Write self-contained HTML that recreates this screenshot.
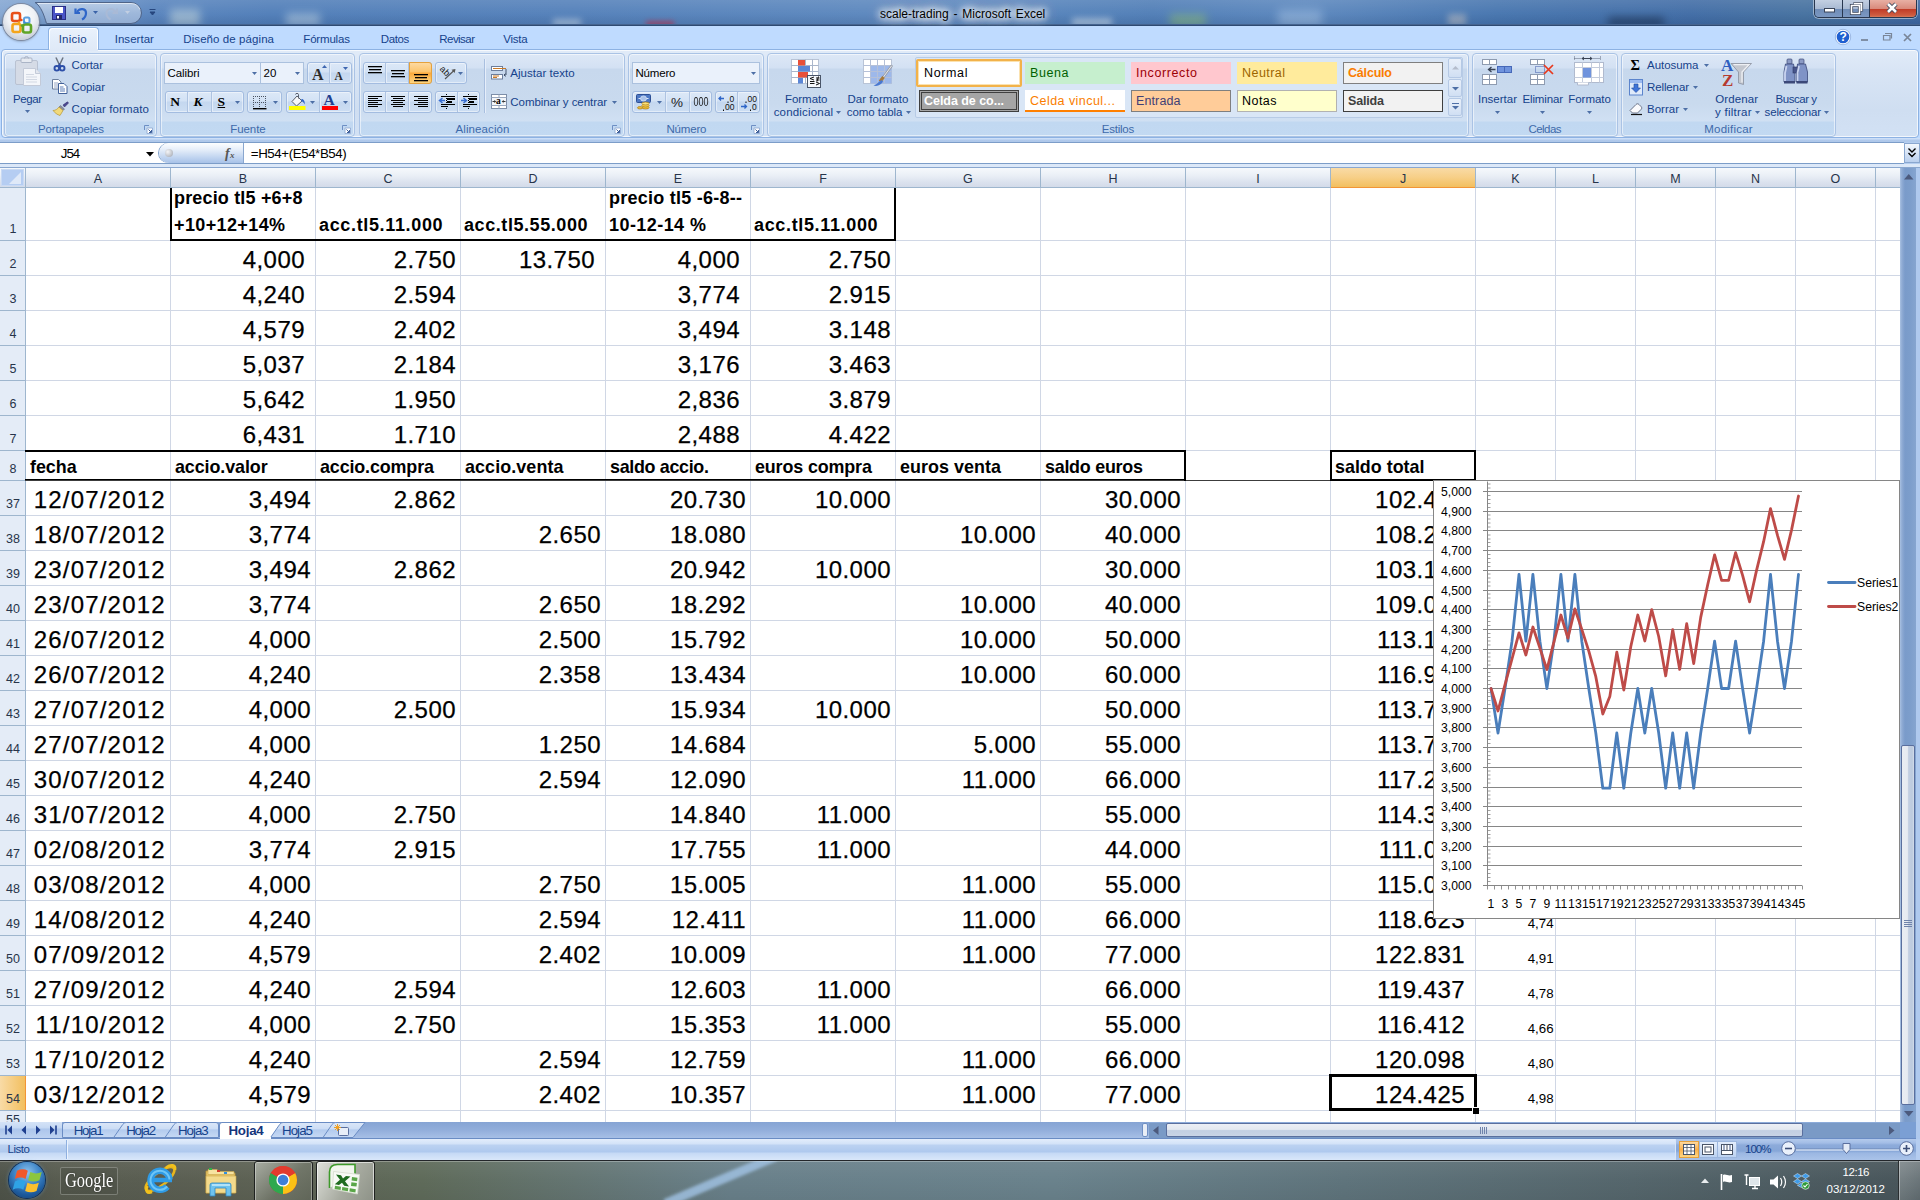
<!DOCTYPE html>
<html lang="es"><head><meta charset="utf-8"><title>scale-trading - Microsoft Excel</title>
<style>
html,body{margin:0;padding:0;}
body{width:1920px;height:1200px;position:relative;overflow:hidden;background:#fff;font-family:"Liberation Sans",sans-serif;font-size:12px;color:#15428b;}
.a{position:absolute;}
.t{position:absolute;white-space:nowrap;line-height:1;}
svg{position:absolute;overflow:visible;}
/* title */
#title{left:0;top:0;width:1920px;height:25px;overflow:hidden;background:linear-gradient(90deg,#84a6d2 0,#7a9fce 2%,#6890c6 5%,#5783bd 8%,#4f7db8 14%,#527fb9 30%,#5a86bd 45%,#5684bc 52%,#4f7db6 60%,#5a86bd 68%,#4574ae 78%,#3f6ba5 88%,#44709f 94%,#3c66a0 100%);}
#tabrow{left:0;top:26px;width:1920px;height:24px;background:#bfdbff;}
#ribbon{left:0;top:50px;width:1920px;height:88px;background:#bfdbff;}
.grp{position:absolute;top:53px;height:82px;border:1px solid #aac3e5;border-radius:4px;background:linear-gradient(#dde8f6 0,#d3e1f3 14px,#c7d8ed 15px,#c9daee 50px,#d0e0f3 67px,#c1d8f1 68px,#c2d9f2 82px);box-shadow:inset 0 0 0 1px rgba(255,255,255,.55);}
.glab{position:absolute;bottom:0;left:0;right:0;height:14px;text-align:center;font-size:12px;line-height:14px;color:#3e6aaa;}
.rt{position:absolute;white-space:nowrap;line-height:1;font-size:12px;color:#15428b;}
.bg{border:1px solid #a3bce0;border-radius:3px;background:linear-gradient(#dce8f7 0,#d3e2f5 45%,#c4d7ef 50%,#cddef3 100%);box-shadow:inset 0 0 0 1px rgba(255,255,255,.45);}
.cb{border:1px solid #abc1de;background:#eaf1fb;}
.hot{border:1px solid #e5a13c;background:linear-gradient(#fdd9a0 0,#fcc46c 45%,#fba83a 50%,#fdd683 100%);}
.ser{font-family:"Liberation Serif",serif;}

</style></head>
<body>
<div class="a" id="title">
<div class="a" style="left:170px;top:9px;width:30px;height:18px;background:#cfe0e0;opacity:.5;filter:blur(4px)"></div>
<div class="a" style="left:286px;top:13px;width:34px;height:14px;background:#cfe0ea;opacity:.45;filter:blur(4px)"></div>
<div class="a" style="left:553px;top:19px;width:28px;height:8px;background:#dfeaf2;opacity:.5;filter:blur(3px)"></div>
<div class="a" style="left:646px;top:21px;width:28px;height:6px;background:#d0203a;opacity:.55;filter:blur(2.5px)"></div>
<div class="a" style="left:1072px;top:18px;width:40px;height:9px;background:#e3edf4;opacity:.5;filter:blur(3px)"></div>
<div class="a" style="left:1170px;top:14px;width:36px;height:13px;background:#8fc070;opacity:.5;filter:blur(4px)"></div>
<div class="a" style="left:1278px;top:10px;width:44px;height:17px;background:#b8d2ee;opacity:.4;filter:blur(5px)"></div>
<div class="a" style="left:1448px;top:14px;width:18px;height:12px;background:#e8d8c8;opacity:.4;filter:blur(3px)"></div>
<div class="a" style="left:1608px;top:17px;width:56px;height:10px;background:#10203a;opacity:.5;filter:blur(4px)"></div>
<div class="a" style="left:0;top:0;width:1920px;height:25px;background:linear-gradient(rgba(255,255,255,.12) 0,rgba(255,255,255,.03) 55%,rgba(0,0,20,.08) 100%)"></div>
</div>
<div class="a" style="left:0;top:24px;width:1920px;height:1px;background:#46648f"></div>
<div class="a" style="left:0;top:25px;width:1920px;height:1px;background:#2e4a72"></div>
<svg style="left:30px;top:0" width="120" height="26" viewBox="0 0 120 26">
<defs><linearGradient id="qg" x1="0" y1="0" x2="0" y2="1"><stop offset="0" stop-color="#c3d4ea" stop-opacity=".85"/><stop offset=".5" stop-color="#a9c0df" stop-opacity=".85"/><stop offset="1" stop-color="#9db6d9" stop-opacity=".85"/></linearGradient></defs>
<path d="M5 2.500 H101 a10.500 10.500 0 0 1 0 21 H16.500 C14 15 11 6 5 2.500z" fill="url(#qg)" stroke="#4f6488" stroke-width="1"/>
<path d="M8 3.500 H101 a9.500 9.500 0 0 1 9 6" fill="none" stroke="rgba(255,255,255,.55)" stroke-width="1"/>
</svg>
<svg style="left:50px;top:4px" width="110" height="18" viewBox="0 0 110 18">
<rect x="2.500" y="2.500" width="13" height="13" fill="#4b55c8" stroke="#2a2f86"/><rect x="5" y="3" width="8" height="6" fill="#fff"/><rect x="6" y="11" width="6" height="4.500" fill="#23286a"/><rect x="7" y="12" width="2" height="2.500" fill="#fff"/>
<path d="M25.500 4.500 L25.500 9 L30 9" fill="none" stroke="#2f66c8" stroke-width="2.200"/><path d="M27 8 C30 3.500 36 4.500 36 9 C36 12 34 14.500 32 15.500" fill="none" stroke="#2f66c8" stroke-width="2.200"/>
<path d="M43 7 l5 0 l-2.500 3z" fill="#3b63a8"/>
<path d="M67 4.500 L67 9 L62.500 9" fill="none" stroke="#a9bad6" stroke-width="2"/><path d="M65.500 8 C62.500 3.500 56.500 4.500 56.500 9 C56.500 12 58.500 14.500 60.500 15.500" fill="none" stroke="#a9bad6" stroke-width="2"/>
<path d="M75 7 l5 0 l-2.500 3z" fill="#c3cfe2"/>
<path d="M99.500 5.500 h6 M100 8 l5 0 l-2.500 3z" stroke="#27477f" fill="#27477f" stroke-width="1"/>
</svg>
<div class="t" style="left:880px;top:8px;font-size:12px;color:#000;word-spacing:1.5px;text-shadow:0 0 6px #fff,0 0 8px #fff,0 0 10px #fff,0 0 14px rgba(255,255,255,.9),0 0 18px rgba(255,255,255,.7)">scale-trading - Microsoft Excel</div>
<div class="a" style="left:1814px;top:0;width:103px;height:18px;border:1px solid #28374f;border-top:none;border-radius:0 0 5px 5px;box-shadow:0 0 0 1px rgba(255,255,255,.45);overflow:hidden;box-sizing:border-box">
<div class="a" style="left:0;top:0;width:27px;height:18px;background:linear-gradient(#c3d0e2 0,#a9bad3 48%,#6f8cb6 50%,#7d9ac4 100%);border-right:1px solid #28374f"></div>
<div class="a" style="left:28px;top:0;width:26px;height:18px;background:linear-gradient(#c3d0e2 0,#a9bad3 48%,#6f8cb6 50%,#7d9ac4 100%);border-right:1px solid #28374f"></div>
<div class="a" style="left:55px;top:0;width:48px;height:18px;background:linear-gradient(#e8b0a4 0,#d98a7c 48%,#c03a26 50%,#cf5c40 85%,#dd8a68 100%)"></div>
</div>
<svg style="left:1814px;top:0" width="104" height="18" viewBox="0 0 104 18">
<rect x="10.500" y="8.500" width="10" height="3.500" fill="#fff" stroke="#3a4559" stroke-width="1"/>
<path d="M37.500 5.500 h8 v8 h-8z M39.500 3.500 h8 v8" fill="none" stroke="#3a4559" stroke-width="3.200"/><path d="M37.500 5.500 h8 v8 h-8z M40 3.500 h7.500 v7.500" fill="none" stroke="#fff" stroke-width="1.600"/>
<path d="M74 4 l8 8 M82 4 l-8 8" stroke="#3a4559" stroke-width="4.400"/><path d="M74 4 l8 8 M82 4 l-8 8" stroke="#fff" stroke-width="2.600"/>
</svg>
<div class="a" id="tabrow"></div>
<div class="a" id="ribbon"></div>
<div class="a" style="left:1px;top:49px;width:1916px;height:87px;border:1px solid #8db2e3;border-radius:4px;background:linear-gradient(#e1ebf8 0,#d9e5f5 20px,#cfdef1 60px,#d2e1f4 86px);box-shadow:inset 0 0 0 1px rgba(255,255,255,.7)"></div>
<div class="a" style="left:48px;top:27px;width:49px;height:22px;border:1px solid #8db2e3;border-bottom:none;border-radius:4px 4px 0 0;background:linear-gradient(#eaf2fc 0,#e3edfa 50%,#dfe9f7 100%);box-shadow:inset 1px 1px 0 #fff,inset -1px 0 0 #fff"></div><div class="a" style="left:49px;top:49px;width:49px;height:2px;background:#dfe9f7"></div>
<div class="t" style="left:58.7px;top:34.3px;font-size:11.5px;color:#15428b;letter-spacing:0.23px;">Inicio</div>
<div class="t" style="left:114.7px;top:34.3px;font-size:11.5px;color:#15428b;letter-spacing:0.04px;">Insertar</div>
<div class="t" style="left:183.3px;top:34.3px;font-size:11.5px;color:#15428b;letter-spacing:0.08px;">Diseño de página</div>
<div class="t" style="left:303.3px;top:34.3px;font-size:11.5px;color:#15428b;letter-spacing:-0.18px;">Fórmulas</div>
<div class="t" style="left:380.7px;top:34.3px;font-size:11.5px;color:#15428b;letter-spacing:-0.36px;">Datos</div>
<div class="t" style="left:439.3px;top:34.3px;font-size:11.5px;color:#15428b;letter-spacing:-0.55px;">Revisar</div>
<div class="t" style="left:503.3px;top:34.3px;font-size:11.5px;color:#15428b;letter-spacing:-0.24px;">Vista</div>
<svg style="left:1834px;top:28px" width="84" height="18" viewBox="0 0 84 18"><g transform="translate(-3 0)">
<circle cx="12" cy="9" r="7" fill="#1f5fd0" stroke="#fff" stroke-width="1.300"/><circle cx="12" cy="9" r="7.700" fill="none" stroke="#6f93cf" stroke-width=".600"/>
<path d="M30 12 h7" stroke="#6f7c90" stroke-width="1.600"/>
<path d="M52.500 7.500 h6.500 v4.500 h-6.500z M54 5.500 h6.500 v5" fill="none" stroke="#7a8698" stroke-width="1.200"/>
<path d="M73 6 l7 7 M80 6 l-7 7" stroke="#7a8698" stroke-width="1.700"/>
</g></svg>
<div class="t" style="left:1839.5px;top:30.5px;font-size:12px;font-weight:bold;color:#fff">?</div>
<div class="grp" style="left:4px;width:151px"></div>
<div class="t" style="left:38.0px;top:124.3px;font-size:11.5px;color:#3e6aaa;letter-spacing:-0.16px;">Portapapeles</div>
<svg style="left:144px;top:125px" width="9" height="9" viewBox="0 0 9 9"><path d="M0.500 5 V0.500 H5" fill="none" stroke="#6d8fc4" stroke-width="1"/><path d="M3 3 h5.500 v5.500 h-5.500z" fill="#fff" stroke="#8aa5cf" stroke-width=".8"/><path d="M4.500 4.500 l3 3 M7.500 5 v2.500 h-2.500" fill="none" stroke="#3d5f9a" stroke-width="1"/></svg>
<div class="grp" style="left:160px;width:193px"></div>
<div class="t" style="left:230.2px;top:124.3px;font-size:11.5px;color:#3e6aaa;letter-spacing:-0.06px;">Fuente</div>
<svg style="left:342px;top:125px" width="9" height="9" viewBox="0 0 9 9"><path d="M0.500 5 V0.500 H5" fill="none" stroke="#6d8fc4" stroke-width="1"/><path d="M3 3 h5.500 v5.500 h-5.500z" fill="#fff" stroke="#8aa5cf" stroke-width=".8"/><path d="M4.500 4.500 l3 3 M7.500 5 v2.500 h-2.500" fill="none" stroke="#3d5f9a" stroke-width="1"/></svg>
<div class="grp" style="left:359px;width:264px"></div>
<div class="t" style="left:455.5px;top:124.3px;font-size:11.5px;color:#3e6aaa;letter-spacing:0.1px;">Alineación</div>
<svg style="left:612px;top:125px" width="9" height="9" viewBox="0 0 9 9"><path d="M0.500 5 V0.500 H5" fill="none" stroke="#6d8fc4" stroke-width="1"/><path d="M3 3 h5.500 v5.500 h-5.500z" fill="#fff" stroke="#8aa5cf" stroke-width=".8"/><path d="M4.500 4.500 l3 3 M7.500 5 v2.500 h-2.500" fill="none" stroke="#3d5f9a" stroke-width="1"/></svg>
<div class="grp" style="left:628px;width:134px"></div>
<div class="t" style="left:666.5px;top:124.3px;font-size:11.5px;color:#3e6aaa;letter-spacing:-0.18px;">Número</div>
<svg style="left:751px;top:125px" width="9" height="9" viewBox="0 0 9 9"><path d="M0.500 5 V0.500 H5" fill="none" stroke="#6d8fc4" stroke-width="1"/><path d="M3 3 h5.500 v5.500 h-5.500z" fill="#fff" stroke="#8aa5cf" stroke-width=".8"/><path d="M4.500 4.500 l3 3 M7.500 5 v2.500 h-2.500" fill="none" stroke="#3d5f9a" stroke-width="1"/></svg>
<div class="grp" style="left:767px;width:700px"></div>
<div class="t" style="left:1101.8px;top:124.3px;font-size:11.5px;color:#3e6aaa;letter-spacing:-0.23px;">Estilos</div>
<div class="grp" style="left:1472px;width:144px"></div>
<div class="t" style="left:1528.5px;top:124.3px;font-size:11.5px;color:#3e6aaa;letter-spacing:-0.56px;">Celdas</div>
<div class="grp" style="left:1621px;width:213px"></div>
<div class="t" style="left:1704.3px;top:124.3px;font-size:11.5px;color:#3e6aaa;letter-spacing:0.21px;">Modificar</div>
<svg style="left:14px;top:56px" width="30" height="32" viewBox="0 0 30 32">
<rect x="1.500" y="4.500" width="22" height="24" rx="1.500" fill="#d5dbe6" stroke="#b9c2d2"/>
<rect x="7" y="2" width="11" height="4.500" rx="1" fill="#e6eaf1" stroke="#aab4c6"/><path d="M10.500 2.500 a2 2 0 0 1 4 0" fill="none" stroke="#aab4c6"/>
<path d="M9.500 12.500 h12 l5 5 v12 h-17z" fill="#f4f6fa" stroke="#c3cad8"/><path d="M21.500 12.500 v5 h5" fill="#e3e7ef" stroke="#c3cad8"/>
<path d="M12 18.500 h8 M12 21 h11 M12 23.500 h11 M12 26 h11" stroke="#d2d8e3" stroke-width="1"/>
</svg>
<div class="t" style="left:13.0px;top:94.3px;font-size:11.5px;color:#15428b;letter-spacing:-0.42px;">Pegar</div>
<svg style="left:25.0px;top:110.0px" width="5" height="3"><path d="M0 0 h5 l-2.5 3 z" fill="#4d6fa6"/></svg>
<svg style="left:53px;top:57px" width="13" height="16" viewBox="0 0 13 16">
<path d="M3.200 1 L6.700 8.500 M9.800 1 L6.300 8.500" stroke="#6a7380" stroke-width="1.500" fill="none" stroke-linecap="round"/>
<circle cx="3.800" cy="11.300" r="2.300" fill="none" stroke="#2d4fa8" stroke-width="1.900"/><circle cx="9.200" cy="11.300" r="2.300" fill="none" stroke="#2d4fa8" stroke-width="1.900"/>
<path d="M5.200 9.500 L6.500 7.500 L7.800 9.500" stroke="#2d4fa8" stroke-width="1.600" fill="none"/>
</svg>
<div class="t" style="left:71.5px;top:60.3px;font-size:11.5px;color:#15428b;letter-spacing:-0.09px;">Cortar</div>
<svg style="left:52px;top:79px" width="16" height="15" viewBox="0 0 16 15">
<path d="M0.500 0.500 h6 l2.500 2.500 v7 h-8.500z" fill="#fff" stroke="#6a7f9f"/><path d="M2 4 h4 M2 6 h5 M2 8 h5" stroke="#7d93b8" stroke-width=".8"/>
<path d="M6.500 4.500 h5.500 l3 3 v7 h-8.500z" fill="#fff" stroke="#42629a"/><path d="M8 8 h3.500 M8 10 h5 M8 12 h5" stroke="#4a6fb0" stroke-width=".9"/>
</svg>
<div class="t" style="left:71.5px;top:82.3px;font-size:11.5px;color:#15428b;letter-spacing:-0.08px;">Copiar</div>
<svg style="left:52px;top:101px" width="17" height="16" viewBox="0 0 17 16">
<path d="M11 4 L15.500 0.800 L16.500 2 L12.500 6z" fill="#4a4690" stroke="#332f6e" stroke-width=".6"/>
<path d="M8.500 4.500 L12.500 8 L11 9.500 L7 6z" fill="#8a8fa0" stroke="#5c6070" stroke-width=".5"/>
<path d="M7 6 L11 9.500 L8 14.500 L4.500 13 L1 9.500 C3.500 9.500 5.500 8 7 6z" fill="#f1d97a" stroke="#b69734" stroke-width=".7"/>
</svg>
<div class="t" style="left:71.5px;top:104.3px;font-size:11.5px;color:#15428b;letter-spacing:0.1px;">Copiar formato</div>
<div class="a cb" style="left:164.0px;top:62.0px;width:95.0px;height:20.0px"></div>
<div class="t" style="left:167.5px;top:68.0px;font-size:11.5px;color:#000;letter-spacing:-0.07px;">Calibri</div>
<svg style="left:251.5px;top:71.5px" width="5" height="3"><path d="M0 0 h5 l-2.5 3 z" fill="#4d6fa6"/></svg>
<div class="a cb" style="left:260.0px;top:62.0px;width:42.0px;height:20.0px"></div>
<div class="t" style="left:263.5px;top:68.0px;font-size:11.5px;color:#000;">20</div>
<svg style="left:294.5px;top:71.5px" width="5" height="3"><path d="M0 0 h5 l-2.5 3 z" fill="#4d6fa6"/></svg>
<div class="a bg" style="left:307.0px;top:62.0px;width:43.0px;height:20.0px"></div>
<div class="a" style="left:329.0px;top:63.0px;width:1px;height:20.0px;background:#aec3e1"></div><div class="a" style="left:330.0px;top:63.0px;width:1px;height:20.0px;background:#e4edf9"></div>
<div class="t" style="left:312.0px;top:66.7px;font-size:16px;color:#2b2b2b;font-weight:bold;font-family:'Liberation Serif',serif;">A</div>
<div class="t" style="left:334.6px;top:70.5px;font-size:11.5px;color:#2b2b2b;font-weight:bold;font-family:'Liberation Serif',serif;">A</div>
<svg style="left:321.500px;top:65px" width="5" height="3"><path d="M0 3 h5 l-2.500 -3z" fill="#3d66b0"/></svg><svg style="left:342.500px;top:66.500px" width="5" height="3"><path d="M0 0 h5 l-2.500 3z" fill="#3d66b0"/></svg>
<div class="a bg" style="left:165.0px;top:91.0px;width:77.0px;height:20.0px"></div>
<div class="a" style="left:187.0px;top:92.0px;width:1px;height:20.0px;background:#aec3e1"></div><div class="a" style="left:188.0px;top:92.0px;width:1px;height:20.0px;background:#e4edf9"></div>
<div class="a" style="left:210.5px;top:92.0px;width:1px;height:20.0px;background:#aec3e1"></div><div class="a" style="left:211.5px;top:92.0px;width:1px;height:20.0px;background:#e4edf9"></div>
<div class="t" style="left:170.3px;top:94.9px;font-size:13.5px;color:#000;font-weight:bold;font-family:'Liberation Serif',serif;">N</div>
<div class="t" style="left:193.5px;top:94.9px;font-size:13.5px;color:#000;font-weight:bold;font-style:italic;font-family:'Liberation Serif',serif;">K</div>
<div class="t" style="left:217.6px;top:94.9px;font-size:13.5px;color:#000;font-weight:bold;font-family:'Liberation Serif',serif;text-decoration:underline;">S</div>
<svg style="left:235.0px;top:101.0px" width="5" height="3"><path d="M0 0 h5 l-2.5 3 z" fill="#4d6fa6"/></svg>
<div class="a bg" style="left:247.0px;top:91.0px;width:33.0px;height:20.0px"></div>
<svg style="left:253px;top:95.500px" width="14" height="14" viewBox="0 0 14 14"><path d="M0 0.500 h13 M0 6.500 h13 M0.500 0 v12 M6.500 0 v12 M12.500 0 v12" stroke="#4a5260" stroke-width="1" stroke-dasharray="1 1" fill="none"/><path d="M0 12.700 h13.500" stroke="#000" stroke-width="1.400"/></svg>
<svg style="left:273.0px;top:101.0px" width="5" height="3"><path d="M0 0 h5 l-2.5 3 z" fill="#4d6fa6"/></svg>
<div class="a bg" style="left:286.0px;top:91.0px;width:64.0px;height:20.0px"></div>
<div class="a" style="left:318.5px;top:92.0px;width:1px;height:20.0px;background:#aec3e1"></div><div class="a" style="left:319.5px;top:92.0px;width:1px;height:20.0px;background:#e4edf9"></div>
<svg style="left:288px;top:93px" width="20" height="18" viewBox="0 0 20 18">
<path d="M4 8.500 L9 3 L14 8 L8.500 13 z" fill="#f6f7f9" stroke="#5a606c" stroke-width="1"/><path d="M7.500 1.500 c0 -1.500 3 -1.500 3 0 v4" fill="none" stroke="#5a606c" stroke-width="1"/>
<path d="M13.500 6 c2.500 0 3.500 2.500 3.300 5.500 c-1 -2 -2 -3 -3.800 -3.300z" fill="#2f66c8"/>
<rect x="1" y="13" width="16.500" height="4" fill="#ffff00"/></svg>
<svg style="left:310.0px;top:101.0px" width="5" height="3"><path d="M0 0 h5 l-2.5 3 z" fill="#4d6fa6"/></svg>
<div class="t" style="left:323.5px;top:91.9px;font-size:15.5px;color:#1f3f8f;font-weight:bold;font-family:'Liberation Serif',serif;">A</div>
<div class="a" style="left:322px;top:106px;width:16px;height:4px;background:#f00"></div>
<svg style="left:343.0px;top:101.0px" width="5" height="3"><path d="M0 0 h5 l-2.5 3 z" fill="#4d6fa6"/></svg>
<div class="a bg" style="left:363.0px;top:62.0px;width:67.0px;height:20.0px"></div>
<div class="a" style="left:385.0px;top:63.0px;width:1px;height:20.0px;background:#aec3e1"></div><div class="a" style="left:386.0px;top:63.0px;width:1px;height:20.0px;background:#e4edf9"></div>
<div class="a" style="left:408.0px;top:63.0px;width:1px;height:20.0px;background:#aec3e1"></div><div class="a" style="left:409.0px;top:63.0px;width:1px;height:20.0px;background:#e4edf9"></div>
<div class="a hot" style="left:409px;top:62px;width:21px;height:20px;border-radius:0 3px 3px 0"></div>
<svg style="left:368.0px;top:66.0px" width="20" height="20"><rect x="0" y="0" width="14" height="1.300" fill="#000"/><rect x="1" y="3" width="12" height="1.300" fill="#000"/><rect x="0" y="6" width="14" height="1.300" fill="#000"/></svg>
<svg style="left:391.0px;top:70.0px" width="20" height="20"><rect x="0" y="0" width="14" height="1.300" fill="#000"/><rect x="1" y="3" width="12" height="1.300" fill="#000"/><rect x="0" y="6" width="14" height="1.300" fill="#000"/></svg>
<svg style="left:414.0px;top:74.0px" width="20" height="20"><rect x="0" y="0" width="14" height="1.300" fill="#000"/><rect x="1" y="3" width="12" height="1.300" fill="#000"/><rect x="0" y="6" width="14" height="1.300" fill="#000"/></svg>
<div class="a bg" style="left:435.0px;top:62.0px;width:30.0px;height:20.0px"></div>
<svg style="left:439px;top:65px" width="20" height="16" viewBox="0 0 20 16">
<text x="1" y="9" font-family="Liberation Sans, sans-serif" font-size="9" fill="#222" transform="rotate(45 6 6)">ab</text>
<path d="M6 14 L15.500 5" stroke="#555" stroke-width="1.100"/><path d="M16.500 4 l-4 .8 l3.200 3.200z" fill="#555"/>
</svg>
<svg style="left:457.5px;top:71.5px" width="5" height="3"><path d="M0 0 h5 l-2.5 3 z" fill="#4d6fa6"/></svg>
<div class="a" style="left:484px;top:59px;width:1px;height:54px;background:#a9bfdf"></div><div class="a" style="left:485px;top:59px;width:1px;height:54px;background:#e6eefa"></div>
<svg style="left:491px;top:65px" width="17" height="16" viewBox="0 0 17 16">
<rect x="0.500" y="1.500" width="11" height="4" fill="#fff" stroke="#6c7e9c"/><rect x="0.500" y="9.500" width="11" height="4.500" fill="#fff" stroke="#6c7e9c"/>
<path d="M2 3.500 h13 M2 11 h6 M2 12.500 h4" stroke="#c87a2a" stroke-width="1"/><path d="M15 4 v6 h-2 M14.500 8.500 l-1.500 1.500 l1.500 1.500" fill="none" stroke="#44546e" stroke-width="1"/>
</svg>
<div class="t" style="left:510.3px;top:67.8px;font-size:11.5px;color:#15428b;letter-spacing:0.04px;">Ajustar texto</div>
<div class="a bg" style="left:363.0px;top:91.0px;width:67.0px;height:20.0px"></div>
<div class="a" style="left:385.0px;top:92.0px;width:1px;height:20.0px;background:#aec3e1"></div><div class="a" style="left:386.0px;top:92.0px;width:1px;height:20.0px;background:#e4edf9"></div>
<div class="a" style="left:408.0px;top:92.0px;width:1px;height:20.0px;background:#aec3e1"></div><div class="a" style="left:409.0px;top:92.0px;width:1px;height:20.0px;background:#e4edf9"></div>
<svg style="left:368.0px;top:96.0px" width="20" height="20"><rect x="0" y="0" width="14" height="1" fill="#000"/><rect x="0" y="2" width="10" height="1" fill="#000"/><rect x="0" y="4" width="14" height="1" fill="#000"/><rect x="0" y="6" width="10" height="1" fill="#000"/><rect x="0" y="8" width="14" height="1" fill="#000"/><rect x="0" y="10" width="10" height="1" fill="#000"/></svg>
<svg style="left:391.0px;top:96.0px" width="20" height="20"><rect x="0" y="0" width="14" height="1" fill="#000"/><rect x="2" y="2" width="10" height="1" fill="#000"/><rect x="0" y="4" width="14" height="1" fill="#000"/><rect x="2" y="6" width="10" height="1" fill="#000"/><rect x="0" y="8" width="14" height="1" fill="#000"/><rect x="2" y="10" width="10" height="1" fill="#000"/></svg>
<svg style="left:414.0px;top:96.0px" width="20" height="20"><rect x="0" y="0" width="14" height="1" fill="#000"/><rect x="4" y="2" width="10" height="1" fill="#000"/><rect x="0" y="4" width="14" height="1" fill="#000"/><rect x="4" y="6" width="10" height="1" fill="#000"/><rect x="0" y="8" width="14" height="1" fill="#000"/><rect x="4" y="10" width="10" height="1" fill="#000"/></svg>
<div class="a bg" style="left:435.0px;top:91.0px;width:43.0px;height:20.0px"></div>
<div class="a" style="left:457.0px;top:92.0px;width:1px;height:20.0px;background:#aec3e1"></div><div class="a" style="left:458.0px;top:92.0px;width:1px;height:20.0px;background:#e4edf9"></div>
<svg style="left:438px;top:93px" width="42" height="17" viewBox="0 0 42 17">
<g fill="#000"><rect x="3" y="3" width="14" height="1"/><rect x="9" y="5" width="8" height="2"/><rect x="9" y="8" width="5" height="2"/><rect x="3" y="11" width="14" height="1"/><rect x="3" y="13" width="7" height="1"/>
<rect x="8" y="1" width="1" height="1"/><rect x="8" y="3" width="1" height="1"/><rect x="8" y="5" width="1" height="1"/><rect x="8" y="7" width="1" height="1"/><rect x="8" y="9" width="1" height="1"/><rect x="8" y="11" width="1" height="1"/><rect x="8" y="13" width="1" height="1"/><rect x="8" y="15" width="1" height="1"/>
<rect x="25" y="3" width="14" height="1"/><rect x="31" y="5" width="8" height="2"/><rect x="31" y="8" width="5" height="2"/><rect x="25" y="11" width="14" height="1"/><rect x="25" y="13" width="7" height="1"/>
<rect x="30" y="1" width="1" height="1"/><rect x="30" y="3" width="1" height="1"/><rect x="30" y="5" width="1" height="1"/><rect x="30" y="7" width="1" height="1"/><rect x="30" y="9" width="1" height="1"/><rect x="30" y="11" width="1" height="1"/><rect x="30" y="13" width="1" height="1"/><rect x="30" y="15" width="1" height="1"/></g>
<path d="M7 7.500 h-5 M4.500 5 l-3 2.500 l3 2.500" stroke="#3b6fd0" stroke-width="1.500" fill="none"/>
<path d="M23 7.500 h5 M25.500 5 l3 2.500 l-3 2.500" stroke="#3b6fd0" stroke-width="1.500" fill="none"/>
</svg>
<svg style="left:491px;top:94px" width="17" height="16" viewBox="0 0 17 16">
<rect x="0.500" y="0.500" width="15" height="14" fill="#fff" stroke="#7d8ea8"/><path d="M0.500 3.500 h15 M0.500 11.500 h15 M8 0.500 v3 M8 11.500 v3" stroke="#9aa8be" stroke-width="1"/>
<rect x="1" y="4" width="14" height="7" fill="#f2f5fa"/><text x="5" y="10.200" font-family="Liberation Serif, serif" font-weight="bold" font-size="9.500" fill="#000">a</text>
<path d="M1.500 7.500 h3 M11.500 7.500 h3 M3.500 6.300 l1.200 1.200 l-1.200 1.200 M12.500 6.300 l-1.200 1.200 l1.200 1.200" stroke="#222" stroke-width=".9" fill="none"/>
</svg>
<div class="t" style="left:510.3px;top:96.8px;font-size:11.5px;color:#15428b;letter-spacing:-0.06px;">Combinar y centrar</div>
<svg style="left:612.0px;top:100.5px" width="5" height="3"><path d="M0 0 h5 l-2.5 3 z" fill="#4d6fa6"/></svg>
<div class="a cb" style="left:632.0px;top:62.0px;width:126.0px;height:20.0px"></div>
<div class="t" style="left:635.5px;top:68.0px;font-size:11.5px;color:#000;letter-spacing:-0.18px;">Número</div>
<svg style="left:750.5px;top:71.5px" width="5" height="3"><path d="M0 0 h5 l-2.5 3 z" fill="#4d6fa6"/></svg>
<div class="a bg" style="left:632.0px;top:91.0px;width:78.0px;height:20.0px"></div>
<div class="a" style="left:665.0px;top:92.0px;width:1px;height:20.0px;background:#aec3e1"></div><div class="a" style="left:666.0px;top:92.0px;width:1px;height:20.0px;background:#e4edf9"></div>
<div class="a" style="left:689.0px;top:92.0px;width:1px;height:20.0px;background:#aec3e1"></div><div class="a" style="left:690.0px;top:92.0px;width:1px;height:20.0px;background:#e4edf9"></div>
<svg style="left:635px;top:93px" width="20" height="18" viewBox="0 0 20 18">
<rect x="1.500" y="1.500" width="14" height="8" rx="1" fill="#4d78c4" stroke="#2d4f94"/><ellipse cx="8.500" cy="5.500" rx="3" ry="2.600" fill="#a9c2ea" stroke="#dfe9f8" stroke-width=".7"/><path d="M3.500 5.500 h2 M11.500 5.500 h2" stroke="#dfe9f8" stroke-width="1"/>
<ellipse cx="10.500" cy="14.500" rx="3.600" ry="1.500" fill="#f2c23c" stroke="#a97a12" stroke-width=".7"/><ellipse cx="10.500" cy="12.500" rx="3.600" ry="1.500" fill="#f7d158" stroke="#a97a12" stroke-width=".7"/><ellipse cx="10.500" cy="10.500" rx="3.600" ry="1.500" fill="#fbe07a" stroke="#a97a12" stroke-width=".7"/>
<ellipse cx="5" cy="14.800" rx="2.600" ry="1.200" fill="#f2c23c" stroke="#a97a12" stroke-width=".7"/>
</svg>
<svg style="left:656.5px;top:100.5px" width="5" height="3"><path d="M0 0 h5 l-2.5 3 z" fill="#4d6fa6"/></svg>
<div class="t" style="left:671.0px;top:96.1px;font-size:13.5px;color:#222;">%</div>
<div class="t" style="left:693.5px;top:99.4px;font-size:9px;color:#222;transform:scaleY(1.35);transform-origin:50% 85%;">000</div>
<div class="a bg" style="left:715.0px;top:91.0px;width:43.0px;height:20.0px"></div>
<div class="a" style="left:737.0px;top:92.0px;width:1px;height:20.0px;background:#aec3e1"></div><div class="a" style="left:738.0px;top:92.0px;width:1px;height:20.0px;background:#e4edf9"></div>
<svg style="left:717px;top:94px" width="42" height="17" viewBox="0 0 42 17">
<path d="M2 4.500 h5 M4 2.500 l-2 2 l2 2" stroke="#2f66c8" stroke-width="1.300" fill="none"/>
<text x="12.500" y="8" font-family="Liberation Sans, sans-serif" font-size="8.500" fill="#111">0</text><text x="8" y="16" font-family="Liberation Sans, sans-serif" font-size="8.500" fill="#111">00</text><rect x="10.500" y="7.500" width="1" height="1.500" fill="#111"/><rect x="6" y="15.500" width="1" height="1.500" fill="#111"/>
<text x="30.500" y="8" font-family="Liberation Sans, sans-serif" font-size="8.500" fill="#111">00</text><text x="35" y="16" font-family="Liberation Sans, sans-serif" font-size="8.500" fill="#111">0</text><rect x="28.500" y="7.500" width="1" height="1.500" fill="#111"/><rect x="33" y="15.500" width="1" height="1.500" fill="#111"/>
<path d="M24 12.500 h5.500 M27.500 10.500 l2 2 l-2 2" stroke="#2f66c8" stroke-width="1.300" fill="none"/>
</svg>
<svg style="left:791px;top:59px" width="31" height="30" viewBox="0 0 31 30">
<rect x="0.500" y="0.500" width="27" height="24" fill="#fff" stroke="#b9c4d6"/>
<path d="M0.500 6.500 h27 M0.500 12.500 h27 M0.500 18.500 h27 M7.500 0.500 v24 M14.500 0.500 v24 M21.500 0.500 v24" stroke="#a9b6cb" stroke-width="1"/>
<rect x="7" y="1" width="7" height="5.500" fill="#e8503a"/><rect x="7" y="7" width="12" height="5.500" fill="#5b86d6"/><rect x="7" y="13" width="10" height="5.500" fill="#e8503a"/><rect x="7" y="19" width="5" height="5.500" fill="#5b86d6"/>
<rect x="16.500" y="16.500" width="13" height="12" fill="#f4f6fa" stroke="#4a5568"/>
<path d="M23 18 l-4 1.500 l4 1.500 M19 22.500 h4.500 M19 24.500 h4.500 M25 19 h3.500 M25 21 h3.500 M27.500 17.500 l-1.500 5 M25 23 l3.500 1.500 l-3.500 1.500" stroke="#111" stroke-width="1" fill="none"/>
</svg>
<div class="t" style="left:785.0px;top:94.3px;font-size:11.5px;color:#15428b;letter-spacing:-0.05px;">Formato</div>
<div class="t" style="left:773.7px;top:107.3px;font-size:11.5px;color:#15428b;letter-spacing:0.18px;">condicional</div>
<svg style="left:836.0px;top:110.5px" width="5" height="3"><path d="M0 0 h5 l-2.5 3 z" fill="#4d6fa6"/></svg>
<svg style="left:863px;top:59px" width="31" height="30" viewBox="0 0 31 30">
<rect x="0.500" y="0.500" width="28" height="24" fill="#fff" stroke="#b9c4d6"/>
<rect x="7.500" y="6.500" width="21" height="18" fill="#9db8ea"/>
<path d="M0.500 6.500 h28 M0.500 12.500 h28 M0.500 18.500 h28 M7.500 0.500 v24 M14.500 0.500 v24 M21.500 0.500 v24" stroke="#b4c0d8" stroke-width="1"/>
<path d="M28.500 7 L19 20" stroke="#9aa0ac" stroke-width="2.600" stroke-linecap="round"/><path d="M28.500 7 L19 20" stroke="#e6e8ee" stroke-width="1" stroke-linecap="round"/>
<path d="M20.500 18 L17 22.500" stroke="#a87a3a" stroke-width="3"/>
<path d="M18.500 21 c-2 1 -4 4 -8 5.500 c4 1.500 8 -1 9.500 -4z" fill="#4a78d0"/>
</svg>
<div class="t" style="left:847.5px;top:94.3px;font-size:11.5px;color:#15428b;letter-spacing:0.01px;">Dar formato</div>
<div class="t" style="left:846.7px;top:107.3px;font-size:11.5px;color:#15428b;letter-spacing:-0.05px;">como tabla</div>
<svg style="left:906.0px;top:110.5px" width="5" height="3"><path d="M0 0 h5 l-2.5 3 z" fill="#4d6fa6"/></svg>
<div class="a" style="left:915px;top:57px;width:546px;height:59px;border:1px solid #b7cbe6;background:#d9e6f6;border-radius:2px"></div>
<div class="a" style="left:916px;top:59px;width:102px;height:24px;border:2px solid #f2b24a;border-radius:2px;background:#fff;box-shadow:inset 0 0 0 1px #fbe2b0"></div>
<div class="t" style="left:924.0px;top:67.1px;font-size:12.5px;color:#000;letter-spacing:0.64px;">Normal</div>
<div class="a" style="left:1025px;top:62px;width:100px;height:22px;background:#c6efce;"></div>
<div class="t" style="left:1030.0px;top:67.1px;font-size:12.5px;color:#006100;letter-spacing:0.59px;">Buena</div>
<div class="a" style="left:1131px;top:62px;width:100px;height:22px;background:#ffc7ce;"></div>
<div class="t" style="left:1136.0px;top:67.1px;font-size:12.5px;color:#9c0006;letter-spacing:0.6px;">Incorrecto</div>
<div class="a" style="left:1237px;top:62px;width:100px;height:22px;background:#ffeb9c;"></div>
<div class="t" style="left:1242.0px;top:67.1px;font-size:12.5px;color:#9c6500;letter-spacing:0.45px;">Neutral</div>
<div class="a" style="left:1343px;top:62px;width:100px;height:22px;background:#f2f2f2;box-sizing:border-box;border:1px solid #7f7f7f;"></div>
<div class="t" style="left:1348.0px;top:67.1px;font-size:12.5px;color:#fa7d00;font-weight:bold;letter-spacing:-0.19px;">Cálculo</div>
<div class="a" style="left:919px;top:90px;width:100px;height:22px;background:#a5a5a5;box-sizing:border-box;border:3px double #3f3f3f;"></div>
<div class="t" style="left:924.0px;top:95.1px;font-size:12.5px;color:#fff;font-weight:bold;letter-spacing:-0.04px;">Celda de co...</div>
<div class="a" style="left:1025px;top:90px;width:100px;height:22px;background:#fff;border-bottom:2px solid #ff8001;height:20px;"></div>
<div class="t" style="left:1030.0px;top:95.1px;font-size:12.5px;color:#fa7d00;letter-spacing:0.46px;">Celda vincul...</div>
<div class="a" style="left:1131px;top:90px;width:100px;height:22px;background:#ffcc99;box-sizing:border-box;border:1px solid #7f7f7f;"></div>
<div class="t" style="left:1136.0px;top:95.1px;font-size:12.5px;color:#3f3f76;letter-spacing:0.12px;">Entrada</div>
<div class="a" style="left:1237px;top:90px;width:100px;height:22px;background:#ffffcc;box-sizing:border-box;border:1px solid #b2b2b2;"></div>
<div class="t" style="left:1242.0px;top:95.1px;font-size:12.5px;color:#000;letter-spacing:0.46px;">Notas</div>
<div class="a" style="left:1343px;top:90px;width:100px;height:22px;background:#f2f2f2;box-sizing:border-box;border:1px solid #3f3f3f;"></div>
<div class="t" style="left:1348.0px;top:95.1px;font-size:12.5px;color:#3f3f3f;font-weight:bold;letter-spacing:-0.16px;">Salida</div>
<div class="a" style="left:1448px;top:58px;width:12px;height:18px;border:1px solid #b5c9e5;border-radius:2px;background:linear-gradient(#e9f0fa,#d0dff3)"></div>
<div class="a" style="left:1448px;top:79px;width:12px;height:16px;border:1px solid #b5c9e5;border-radius:2px;background:linear-gradient(#e9f0fa,#d0dff3)"></div>
<div class="a" style="left:1448px;top:98px;width:12px;height:16px;border:1px solid #b5c9e5;border-radius:2px;background:linear-gradient(#e9f0fa,#d0dff3)"></div>
<svg style="left:1451.500px;top:66px" width="7" height="4"><path d="M0 3.500 h7 l-3.500 -3.500z" fill="#b4bccb"/></svg>
<svg style="left:1451.500px;top:87px" width="7" height="4"><path d="M0 0 h7 l-3.500 3.500z" fill="#4d6fa6"/></svg>
<svg style="left:1451.500px;top:103px" width="7" height="8"><path d="M0 0.500 h7" stroke="#4d6fa6"/><path d="M0 3 h7 l-3.500 3.500z" fill="#4d6fa6"/></svg>
<svg style="left:1481px;top:58px" width="33" height="28" viewBox="0 0 33 28">
<rect x="1.500" y="1.500" width="14" height="5" fill="#fff" stroke="#8e9bb0"/><path d="M8.500 1.500 v5" stroke="#8e9bb0"/>
<rect x="1.500" y="16.500" width="14" height="10" fill="#fff" stroke="#8e9bb0"/><path d="M8.500 16.500 v10 M1.500 21.500 h14" stroke="#8e9bb0"/>
<rect x="16.500" y="8.500" width="14" height="6" fill="#6f93dd" stroke="#4668b8"/><path d="M23.500 8.500 v6" stroke="#4668b8"/>
<path d="M14.500 11.500 h-6.500 M10.500 9 l-3 2.500 l3 2.500" stroke="#3a4354" stroke-width="1.300" fill="none"/>
</svg>
<div class="t" style="left:1478.0px;top:94.3px;font-size:11.5px;color:#15428b;letter-spacing:0.0px;">Insertar</div>
<svg style="left:1495.0px;top:110.5px" width="5" height="3"><path d="M0 0 h5 l-2.5 3 z" fill="#4d6fa6"/></svg>
<svg style="left:1529px;top:58px" width="28" height="28" viewBox="0 0 28 28">
<rect x="1.500" y="1.500" width="14" height="5" fill="#fff" stroke="#8e9bb0"/><path d="M8.500 1.500 v5" stroke="#8e9bb0"/>
<rect x="1.500" y="16.500" width="14" height="10" fill="#fff" stroke="#8e9bb0"/><path d="M8.500 16.500 v10 M1.500 21.500 h14" stroke="#8e9bb0"/>
<rect x="6.500" y="8.500" width="9" height="6" fill="none" stroke="#3c57a6" stroke-dasharray="1 1"/>
<path d="M15 7 l9 9 M24 7 l-9 9" stroke="#e8381c" stroke-width="1.700"/>
</svg>
<div class="t" style="left:1522.5px;top:94.3px;font-size:11.5px;color:#15428b;letter-spacing:-0.15px;">Eliminar</div>
<svg style="left:1540.0px;top:110.5px" width="5" height="3"><path d="M0 0 h5 l-2.5 3 z" fill="#4d6fa6"/></svg>
<svg style="left:1573px;top:56px" width="32" height="31" viewBox="0 0 32 31">
<path d="M1.500 2.500 h26 M1.500 0.500 v4 M27.500 0.500 v4" stroke="#5c667a" stroke-width="1" stroke-dasharray="1 1"/><path d="M9 2.500 h10 M11 1 l-2 1.500 l2 1.500 M17 1 l2 1.500 l-2 1.500" stroke="#3a4354" stroke-width="1" fill="none"/>
<rect x="1.500" y="6.500" width="29" height="20" fill="#fff" stroke="#b0bace"/><path d="M1.500 11.500 h29 M1.500 21.500 h29 M9.500 6.500 v20 M18.500 6.500 v20 M26.500 6.500 v20" stroke="#c4ccdc"/>
<rect x="10" y="12" width="8" height="9.500" fill="#6f93dd"/>
<path d="M4.500 26.500 v2.500 h11 v-2.500" fill="#fff" stroke="#b0bace"/>
</svg>
<div class="t" style="left:1568.3px;top:94.3px;font-size:11.5px;color:#15428b;letter-spacing:-0.05px;">Formato</div>
<svg style="left:1587.0px;top:110.5px" width="5" height="3"><path d="M0 0 h5 l-2.5 3 z" fill="#4d6fa6"/></svg>
<div class="t" style="left:1630.5px;top:58.2px;font-size:14.5px;color:#000;font-weight:bold;font-family:'Liberation Serif',serif;">Σ</div>
<div class="t" style="left:1647.0px;top:60.3px;font-size:11.5px;color:#15428b;letter-spacing:-0.04px;">Autosuma</div>
<svg style="left:1704.0px;top:63.5px" width="5" height="3"><path d="M0 0 h5 l-2.5 3 z" fill="#4d6fa6"/></svg>
<svg style="left:1629px;top:79px" width="14" height="17" viewBox="0 0 14 17">
<rect x="0.500" y="0.500" width="13" height="15.500" fill="#dfeafa" stroke="#5b84cc"/><rect x="1" y="1" width="12" height="3" fill="#9cbaf0"/>
<path d="M5 5 h4 v4 h2.500 l-4.500 4.500 l-4.500 -4.500 h2.500z" fill="#3f74d8" stroke="#244a9a" stroke-width=".6"/>
</svg>
<div class="t" style="left:1647.0px;top:82.3px;font-size:11.5px;color:#15428b;letter-spacing:-0.12px;">Rellenar</div>
<svg style="left:1693.0px;top:85.5px" width="5" height="3"><path d="M0 0 h5 l-2.5 3 z" fill="#4d6fa6"/></svg>
<svg style="left:1628px;top:102px" width="16" height="14" viewBox="0 0 16 14">
<path d="M2 8.500 L8 2.500 c1 -1 2 -1 3 0 l2 2 c1 1 1 2 0 3 L9.500 11 h-5z" fill="#fbfbfd" stroke="#6a7388" stroke-width="1"/>
<path d="M3 12.500 h11" stroke="#111" stroke-width="1.200"/>
</svg>
<div class="t" style="left:1647.0px;top:104.3px;font-size:11.5px;color:#15428b;letter-spacing:0.01px;">Borrar</div>
<svg style="left:1683.0px;top:107.5px" width="5" height="3"><path d="M0 0 h5 l-2.5 3 z" fill="#4d6fa6"/></svg>
<svg style="left:1720px;top:56px" width="34" height="32" viewBox="0 0 34 32">
<text x="1" y="15" font-family="Liberation Serif, serif" font-weight="bold" font-size="17" fill="#2f5fc0">A</text>
<text x="2" y="30" font-family="Liberation Serif, serif" font-weight="bold" font-size="17" fill="#b63a30">Z</text>
<path d="M11 7.500 h20.500 l-8 8.500 v12.500 l-5 -1.500 v-11z" fill="#c3c7cf" stroke="#8a909e" stroke-width=".8"/>
<path d="M13.500 8.700 h15.500 l-7 7.300 v10.500" fill="none" stroke="#eef0f4" stroke-width="1.300"/>
</svg>
<div class="t" style="left:1715.3px;top:94.3px;font-size:11.5px;color:#15428b;letter-spacing:0.09px;">Ordenar</div>
<div class="t" style="left:1715.0px;top:107.3px;font-size:11.5px;color:#15428b;letter-spacing:0.25px;">y filtrar</div>
<svg style="left:1754.5px;top:110.5px" width="5" height="3"><path d="M0 0 h5 l-2.5 3 z" fill="#4d6fa6"/></svg>
<svg style="left:1781px;top:58px" width="30" height="28" viewBox="0 0 30 28">
<rect x="6" y="1" width="5" height="5" rx="1" fill="#8b9ac4" stroke="#3f4b78" stroke-width=".7"/><rect x="18" y="1" width="5" height="5" rx="1" fill="#8b9ac4" stroke="#3f4b78" stroke-width=".7"/>
<path d="M4.500 6 h8 l1.500 8 v10 h-11 v-10z" fill="#7f93c6" stroke="#3a4878" stroke-width=".8"/><path d="M16.500 6 h8 l2 8 v10 h-11 v-10z" fill="#7f93c6" stroke="#3a4878" stroke-width=".8"/>
<rect x="12" y="9" width="5" height="6" fill="#47558a" stroke="#2f3a66" stroke-width=".6"/>
<path d="M5.500 8 l-1.500 7 v8" stroke="#c9d4f0" stroke-width="1.800" fill="none"/><path d="M18 8 l-1.500 7 v8" stroke="#c9d4f0" stroke-width="1.800" fill="none"/>
<rect x="3" y="23" width="11" height="2.500" fill="#3b4878"/><rect x="15.500" y="23" width="11" height="2.500" fill="#3b4878"/>
</svg>
<div class="t" style="left:1775.6px;top:94.3px;font-size:11.5px;color:#15428b;letter-spacing:-0.46px;">Buscar y</div>
<div class="t" style="left:1764.6px;top:107.3px;font-size:11.5px;color:#15428b;letter-spacing:-0.18px;">seleccionar</div>
<svg style="left:1824.0px;top:110.5px" width="5" height="3"><path d="M0 0 h5 l-2.5 3 z" fill="#4d6fa6"/></svg>
<div class="a" style="left:3px;top:4px;width:36px;height:36px;border-radius:50%;background:radial-gradient(circle at 50% 35%,#ffffff 0,#f0f2f6 45%,#c9ced8 80%,#a9b0bd 100%);box-shadow:0 0 0 1px #7f8aa0,0 1px 3px rgba(0,0,0,.4)"></div>
<svg style="left:9.500px;top:11px" width="24" height="24" viewBox="0 0 24 24">
<rect x="2" y="2" width="8" height="8" rx="2" fill="none" stroke="#e8501a" stroke-width="2.600"/>
<rect x="14" y="6.500" width="5.500" height="5.500" rx="1.500" fill="none" stroke="#3f8fd8" stroke-width="2" opacity=".85"/>
<rect x="2.500" y="13" width="8" height="8" rx="2" fill="none" stroke="#f4a51c" stroke-width="2.600"/>
<rect x="13" y="13.500" width="8" height="8" rx="2" fill="none" stroke="#5fa526" stroke-width="2.600"/>
<circle cx="11.500" cy="9" r="1.200" fill="#e8501a"/><circle cx="14.500" cy="11.500" r="1.200" fill="#3f8fd8"/><circle cx="9" cy="11.500" r="1.200" fill="#f4a51c"/><circle cx="11.800" cy="14.500" r="1.200" fill="#5fa526"/>
</svg>
<div class="a" style="left:0;top:138px;width:1920px;height:30px;background:linear-gradient(#d6e5f9 0,#c3d9f7 1px,#a9c3e6 3px,#b4cdef 4px,#b4cdef 100%)"></div>
<div class="a" style="left:0;top:142px;width:1904px;height:20px;background:#fff;border-top:1px solid #7c9dc8;border-bottom:1px solid #7c9dc8"></div>
<div class="a" style="left:0;top:164px;width:1920px;height:3px;background:#dce8f8"></div>
<div class="a" style="left:0;top:167px;width:1920px;height:1px;background:#8aa7cf"></div>
<div class="a" style="left:159px;top:143px;width:84px;height:20px;border-radius:10px 0 0 10px;background:linear-gradient(#fdfeff 0,#e4edf9 35%,#b9cfee 80%,#a8c2e8 100%);box-shadow:-1px 0 0 #7c9dc8"></div>
<div class="a" style="left:243px;top:143px;width:1px;height:20px;background:#8aa7cf"></div>
<div class="a" style="left:165px;top:149px;width:8px;height:8px;border-radius:50%;background:radial-gradient(circle at 35% 35%,#f4f5f7,#9ea3ad)"></div>
<svg style="left:145.500px;top:152px" width="8" height="5"><path d="M0 0 h8 l-4 4.500z" fill="#000"/></svg>
<div class="a" style="left:1904px;top:143px;width:16px;height:20px;border:1px solid #8aa7cf;box-sizing:border-box;background:linear-gradient(#f4f8fd,#b9cfee)"></div>
<svg style="left:1908px;top:148px" width="8" height="10"><path d="M0.500 0.500 l3.500 3.500 l3.500 -3.500 M0.500 5 l3.500 3.500 l3.500 -3.500" fill="none" stroke="#000" stroke-width="1.400"/></svg>
<div class="t" style="left:225.0px;top:146.6px;font-size:14px;color:#555;font-weight:bold;font-style:italic;font-family:'Liberation Serif',serif;">f</div>
<div class="t" style="left:230.0px;top:151.4px;font-size:9px;color:#555;font-weight:bold;font-style:italic;font-family:'Liberation Serif',serif;">x</div>
<div class="t" style="left:60.8px;top:147.4px;font-size:13.3px;color:#000;letter-spacing:-1.07px;">J54</div>
<div class="t" style="left:250.8px;top:147.4px;font-size:13.3px;color:#000;letter-spacing:-0.41px;">=H54+(E54*B54)</div>
<div class="a" id="grid" style="left:0;top:168px;width:1900px;height:954px;overflow:hidden;background:#fff">
<div class="a" style="left:0;top:0;width:1900px;height:19px;background:linear-gradient(#f6f9fc 0,#eaeff6 40%,#dbe2ee 75%,#d3dbe9 100%);border-bottom:1px solid #9eb6ce"></div>
<div class="a" style="left:1331px;top:0;width:144px;height:19px;background:linear-gradient(#f9dba6 0,#f7cf87 50%,#f2bf5f 100%);border-bottom:1px solid #f29536"></div>
<div class="a" style="left:0;top:20px;width:25px;height:940px;background:#e4ecf7"></div>
<div class="a" style="left:25px;top:0;width:1px;height:960px;background:#9eb6ce"></div>
<div class="a" style="left:0;top:908px;width:25px;height:34px;background:linear-gradient(90deg,#f9dba6,#f2bf5f);border-right:1px solid #f29536"></div>
<div class="a" style="left:1px;top:1px;width:23px;height:17px;background:#b5cdf2;border:1px solid #c9daf4;box-sizing:border-box"></div><svg style="left:9px;top:4px" width="12" height="12"><path d="M12 0 v12 h-12z" fill="#dfe9f8"/></svg>
<div class="a" style="left:170px;top:0;width:1px;height:19px;background:#9eb6ce"></div><div class="a" style="left:170px;top:20px;width:1px;height:940px;background:#d0d7e5"></div>
<div class="a" style="left:315px;top:0;width:1px;height:19px;background:#9eb6ce"></div><div class="a" style="left:315px;top:20px;width:1px;height:940px;background:#d0d7e5"></div>
<div class="a" style="left:460px;top:0;width:1px;height:19px;background:#9eb6ce"></div><div class="a" style="left:460px;top:20px;width:1px;height:940px;background:#d0d7e5"></div>
<div class="a" style="left:605px;top:0;width:1px;height:19px;background:#9eb6ce"></div><div class="a" style="left:605px;top:20px;width:1px;height:940px;background:#d0d7e5"></div>
<div class="a" style="left:750px;top:0;width:1px;height:19px;background:#9eb6ce"></div><div class="a" style="left:750px;top:20px;width:1px;height:940px;background:#d0d7e5"></div>
<div class="a" style="left:895px;top:0;width:1px;height:19px;background:#9eb6ce"></div><div class="a" style="left:895px;top:20px;width:1px;height:940px;background:#d0d7e5"></div>
<div class="a" style="left:1040px;top:0;width:1px;height:19px;background:#9eb6ce"></div><div class="a" style="left:1040px;top:20px;width:1px;height:940px;background:#d0d7e5"></div>
<div class="a" style="left:1185px;top:0;width:1px;height:19px;background:#9eb6ce"></div><div class="a" style="left:1185px;top:20px;width:1px;height:940px;background:#d0d7e5"></div>
<div class="a" style="left:1330px;top:0;width:1px;height:19px;background:#9eb6ce"></div><div class="a" style="left:1330px;top:20px;width:1px;height:940px;background:#d0d7e5"></div>
<div class="a" style="left:1475px;top:0;width:1px;height:19px;background:#9eb6ce"></div><div class="a" style="left:1475px;top:20px;width:1px;height:940px;background:#d0d7e5"></div>
<div class="a" style="left:1555px;top:0;width:1px;height:19px;background:#9eb6ce"></div><div class="a" style="left:1555px;top:20px;width:1px;height:940px;background:#d0d7e5"></div>
<div class="a" style="left:1635px;top:0;width:1px;height:19px;background:#9eb6ce"></div><div class="a" style="left:1635px;top:20px;width:1px;height:940px;background:#d0d7e5"></div>
<div class="a" style="left:1715px;top:0;width:1px;height:19px;background:#9eb6ce"></div><div class="a" style="left:1715px;top:20px;width:1px;height:940px;background:#d0d7e5"></div>
<div class="a" style="left:1795px;top:0;width:1px;height:19px;background:#9eb6ce"></div><div class="a" style="left:1795px;top:20px;width:1px;height:940px;background:#d0d7e5"></div>
<div class="a" style="left:1875px;top:0;width:1px;height:19px;background:#9eb6ce"></div><div class="a" style="left:1875px;top:20px;width:1px;height:940px;background:#d0d7e5"></div>
<div class="a" style="left:26px;top:72px;width:1880px;height:1px;background:#d0d7e5"></div><div class="a" style="left:0;top:72px;width:25px;height:1px;background:#9eb6ce"></div>
<div class="a" style="left:26px;top:107px;width:1880px;height:1px;background:#d0d7e5"></div><div class="a" style="left:0;top:107px;width:25px;height:1px;background:#9eb6ce"></div>
<div class="a" style="left:26px;top:142px;width:1880px;height:1px;background:#d0d7e5"></div><div class="a" style="left:0;top:142px;width:25px;height:1px;background:#9eb6ce"></div>
<div class="a" style="left:26px;top:177px;width:1880px;height:1px;background:#d0d7e5"></div><div class="a" style="left:0;top:177px;width:25px;height:1px;background:#9eb6ce"></div>
<div class="a" style="left:26px;top:212px;width:1880px;height:1px;background:#d0d7e5"></div><div class="a" style="left:0;top:212px;width:25px;height:1px;background:#9eb6ce"></div>
<div class="a" style="left:26px;top:247px;width:1880px;height:1px;background:#d0d7e5"></div><div class="a" style="left:0;top:247px;width:25px;height:1px;background:#9eb6ce"></div>
<div class="a" style="left:26px;top:282px;width:1880px;height:1px;background:#d0d7e5"></div><div class="a" style="left:0;top:282px;width:25px;height:1px;background:#9eb6ce"></div>
<div class="a" style="left:26px;top:312px;width:1880px;height:1px;background:#d0d7e5"></div><div class="a" style="left:0;top:312px;width:25px;height:1px;background:#9eb6ce"></div>
<div class="a" style="left:26px;top:347px;width:1880px;height:1px;background:#d0d7e5"></div><div class="a" style="left:0;top:347px;width:25px;height:1px;background:#9eb6ce"></div>
<div class="a" style="left:26px;top:382px;width:1880px;height:1px;background:#d0d7e5"></div><div class="a" style="left:0;top:382px;width:25px;height:1px;background:#9eb6ce"></div>
<div class="a" style="left:26px;top:417px;width:1880px;height:1px;background:#d0d7e5"></div><div class="a" style="left:0;top:417px;width:25px;height:1px;background:#9eb6ce"></div>
<div class="a" style="left:26px;top:452px;width:1880px;height:1px;background:#d0d7e5"></div><div class="a" style="left:0;top:452px;width:25px;height:1px;background:#9eb6ce"></div>
<div class="a" style="left:26px;top:487px;width:1880px;height:1px;background:#d0d7e5"></div><div class="a" style="left:0;top:487px;width:25px;height:1px;background:#9eb6ce"></div>
<div class="a" style="left:26px;top:522px;width:1880px;height:1px;background:#d0d7e5"></div><div class="a" style="left:0;top:522px;width:25px;height:1px;background:#9eb6ce"></div>
<div class="a" style="left:26px;top:557px;width:1880px;height:1px;background:#d0d7e5"></div><div class="a" style="left:0;top:557px;width:25px;height:1px;background:#9eb6ce"></div>
<div class="a" style="left:26px;top:592px;width:1880px;height:1px;background:#d0d7e5"></div><div class="a" style="left:0;top:592px;width:25px;height:1px;background:#9eb6ce"></div>
<div class="a" style="left:26px;top:627px;width:1880px;height:1px;background:#d0d7e5"></div><div class="a" style="left:0;top:627px;width:25px;height:1px;background:#9eb6ce"></div>
<div class="a" style="left:26px;top:662px;width:1880px;height:1px;background:#d0d7e5"></div><div class="a" style="left:0;top:662px;width:25px;height:1px;background:#9eb6ce"></div>
<div class="a" style="left:26px;top:697px;width:1880px;height:1px;background:#d0d7e5"></div><div class="a" style="left:0;top:697px;width:25px;height:1px;background:#9eb6ce"></div>
<div class="a" style="left:26px;top:732px;width:1880px;height:1px;background:#d0d7e5"></div><div class="a" style="left:0;top:732px;width:25px;height:1px;background:#9eb6ce"></div>
<div class="a" style="left:26px;top:767px;width:1880px;height:1px;background:#d0d7e5"></div><div class="a" style="left:0;top:767px;width:25px;height:1px;background:#9eb6ce"></div>
<div class="a" style="left:26px;top:802px;width:1880px;height:1px;background:#d0d7e5"></div><div class="a" style="left:0;top:802px;width:25px;height:1px;background:#9eb6ce"></div>
<div class="a" style="left:26px;top:837px;width:1880px;height:1px;background:#d0d7e5"></div><div class="a" style="left:0;top:837px;width:25px;height:1px;background:#9eb6ce"></div>
<div class="a" style="left:26px;top:872px;width:1880px;height:1px;background:#d0d7e5"></div><div class="a" style="left:0;top:872px;width:25px;height:1px;background:#9eb6ce"></div>
<div class="a" style="left:26px;top:907px;width:1880px;height:1px;background:#d0d7e5"></div><div class="a" style="left:0;top:907px;width:25px;height:1px;background:#9eb6ce"></div>
<div class="a" style="left:26px;top:942px;width:1880px;height:1px;background:#d0d7e5"></div><div class="a" style="left:0;top:942px;width:25px;height:1px;background:#9eb6ce"></div>
<div class="t" style="left:93.8px;top:4.7px;font-size:12.5px;color:#27344a;">A</div>
<div class="t" style="left:238.8px;top:4.7px;font-size:12.5px;color:#27344a;">B</div>
<div class="t" style="left:383.5px;top:4.7px;font-size:12.5px;color:#27344a;">C</div>
<div class="t" style="left:528.5px;top:4.7px;font-size:12.5px;color:#27344a;">D</div>
<div class="t" style="left:673.8px;top:4.7px;font-size:12.5px;color:#27344a;">E</div>
<div class="t" style="left:819.2px;top:4.7px;font-size:12.5px;color:#27344a;">F</div>
<div class="t" style="left:963.1px;top:4.7px;font-size:12.5px;color:#27344a;">G</div>
<div class="t" style="left:1108.5px;top:4.7px;font-size:12.5px;color:#27344a;">H</div>
<div class="t" style="left:1256.3px;top:4.7px;font-size:12.5px;color:#27344a;">I</div>
<div class="t" style="left:1399.9px;top:4.7px;font-size:12.5px;color:#27344a;">J</div>
<div class="t" style="left:1511.3px;top:4.7px;font-size:12.5px;color:#27344a;">K</div>
<div class="t" style="left:1592.0px;top:4.7px;font-size:12.5px;color:#27344a;">L</div>
<div class="t" style="left:1670.3px;top:4.7px;font-size:12.5px;color:#27344a;">M</div>
<div class="t" style="left:1751.0px;top:4.7px;font-size:12.5px;color:#27344a;">N</div>
<div class="t" style="left:1830.6px;top:4.7px;font-size:12.5px;color:#27344a;">O</div>
<div class="t" style="left:9.5px;top:54.9px;font-size:12.5px;color:#27344a;">1</div>
<div class="t" style="left:9.5px;top:89.9px;font-size:12.5px;color:#27344a;">2</div>
<div class="t" style="left:9.5px;top:124.9px;font-size:12.5px;color:#27344a;">3</div>
<div class="t" style="left:9.5px;top:159.9px;font-size:12.5px;color:#27344a;">4</div>
<div class="t" style="left:9.5px;top:194.9px;font-size:12.5px;color:#27344a;">5</div>
<div class="t" style="left:9.5px;top:229.9px;font-size:12.5px;color:#27344a;">6</div>
<div class="t" style="left:9.5px;top:264.9px;font-size:12.5px;color:#27344a;">7</div>
<div class="t" style="left:9.5px;top:295.4px;font-size:12.5px;color:#27344a;">8</div>
<div class="t" style="left:6.0px;top:329.9px;font-size:12.5px;color:#27344a;">37</div>
<div class="t" style="left:6.0px;top:364.9px;font-size:12.5px;color:#27344a;">38</div>
<div class="t" style="left:6.0px;top:399.9px;font-size:12.5px;color:#27344a;">39</div>
<div class="t" style="left:6.0px;top:434.9px;font-size:12.5px;color:#27344a;">40</div>
<div class="t" style="left:6.0px;top:469.9px;font-size:12.5px;color:#27344a;">41</div>
<div class="t" style="left:6.0px;top:504.9px;font-size:12.5px;color:#27344a;">42</div>
<div class="t" style="left:6.0px;top:539.9px;font-size:12.5px;color:#27344a;">43</div>
<div class="t" style="left:6.0px;top:574.9px;font-size:12.5px;color:#27344a;">44</div>
<div class="t" style="left:6.0px;top:609.9px;font-size:12.5px;color:#27344a;">45</div>
<div class="t" style="left:6.0px;top:644.9px;font-size:12.5px;color:#27344a;">46</div>
<div class="t" style="left:6.0px;top:679.9px;font-size:12.5px;color:#27344a;">47</div>
<div class="t" style="left:6.0px;top:714.9px;font-size:12.5px;color:#27344a;">48</div>
<div class="t" style="left:6.0px;top:749.9px;font-size:12.5px;color:#27344a;">49</div>
<div class="t" style="left:6.0px;top:784.9px;font-size:12.5px;color:#27344a;">50</div>
<div class="t" style="left:6.0px;top:819.9px;font-size:12.5px;color:#27344a;">51</div>
<div class="t" style="left:6.0px;top:854.9px;font-size:12.5px;color:#27344a;">52</div>
<div class="t" style="left:6.0px;top:889.9px;font-size:12.5px;color:#27344a;">53</div>
<div class="t" style="left:6.0px;top:924.9px;font-size:12.5px;color:#27344a;">54</div>
<div class="t" style="left:6.0px;top:945.9px;font-size:12.5px;color:#27344a;">55</div>
<div class="t" style="left:174.0px;top:20.8px;font-size:18px;color:#000;font-weight:bold;letter-spacing:0.17px;">precio tl5 +6+8</div>
<div class="t" style="left:174.0px;top:48.3px;font-size:18px;color:#000;font-weight:bold;letter-spacing:0.38px;">+10+12+14%</div>
<div class="t" style="left:319.0px;top:48.3px;font-size:18px;color:#000;font-weight:bold;letter-spacing:0.65px;">acc.tl5.11.000</div>
<div class="t" style="left:464.0px;top:48.3px;font-size:18px;color:#000;font-weight:bold;letter-spacing:0.57px;">acc.tl5.55.000</div>
<div class="t" style="left:609.0px;top:20.8px;font-size:18px;color:#000;font-weight:bold;letter-spacing:0.25px;">precio tl5 -6-8--</div>
<div class="t" style="left:609.0px;top:48.3px;font-size:18px;color:#000;font-weight:bold;letter-spacing:0.44px;">10-12-14 %</div>
<div class="t" style="left:754.0px;top:48.3px;font-size:18px;color:#000;font-weight:bold;letter-spacing:0.65px;">acc.tl5.11.000</div>
<div class="t" style="left:242.7px;top:80.2px;font-size:24px;color:#000;-webkit-text-stroke:0.25px #000;letter-spacing:0.45px;">4,000</div>
<div class="t" style="left:393.7px;top:80.2px;font-size:24px;color:#000;-webkit-text-stroke:0.25px #000;letter-spacing:0.45px;">2.750</div>
<div class="t" style="left:518.9px;top:80.2px;font-size:24px;color:#000;-webkit-text-stroke:0.25px #000;letter-spacing:0.45px;">13.750</div>
<div class="t" style="left:677.7px;top:80.2px;font-size:24px;color:#000;-webkit-text-stroke:0.25px #000;letter-spacing:0.45px;">4,000</div>
<div class="t" style="left:828.7px;top:80.2px;font-size:24px;color:#000;-webkit-text-stroke:0.25px #000;letter-spacing:0.45px;">2.750</div>
<div class="t" style="left:242.7px;top:115.2px;font-size:24px;color:#000;-webkit-text-stroke:0.25px #000;letter-spacing:0.45px;">4,240</div>
<div class="t" style="left:393.7px;top:115.2px;font-size:24px;color:#000;-webkit-text-stroke:0.25px #000;letter-spacing:0.45px;">2.594</div>
<div class="t" style="left:677.7px;top:115.2px;font-size:24px;color:#000;-webkit-text-stroke:0.25px #000;letter-spacing:0.45px;">3,774</div>
<div class="t" style="left:828.7px;top:115.2px;font-size:24px;color:#000;-webkit-text-stroke:0.25px #000;letter-spacing:0.45px;">2.915</div>
<div class="t" style="left:242.7px;top:150.2px;font-size:24px;color:#000;-webkit-text-stroke:0.25px #000;letter-spacing:0.45px;">4,579</div>
<div class="t" style="left:393.7px;top:150.2px;font-size:24px;color:#000;-webkit-text-stroke:0.25px #000;letter-spacing:0.45px;">2.402</div>
<div class="t" style="left:677.7px;top:150.2px;font-size:24px;color:#000;-webkit-text-stroke:0.25px #000;letter-spacing:0.45px;">3,494</div>
<div class="t" style="left:828.7px;top:150.2px;font-size:24px;color:#000;-webkit-text-stroke:0.25px #000;letter-spacing:0.45px;">3.148</div>
<div class="t" style="left:242.7px;top:185.2px;font-size:24px;color:#000;-webkit-text-stroke:0.25px #000;letter-spacing:0.45px;">5,037</div>
<div class="t" style="left:393.7px;top:185.2px;font-size:24px;color:#000;-webkit-text-stroke:0.25px #000;letter-spacing:0.45px;">2.184</div>
<div class="t" style="left:677.7px;top:185.2px;font-size:24px;color:#000;-webkit-text-stroke:0.25px #000;letter-spacing:0.45px;">3,176</div>
<div class="t" style="left:828.7px;top:185.2px;font-size:24px;color:#000;-webkit-text-stroke:0.25px #000;letter-spacing:0.45px;">3.463</div>
<div class="t" style="left:242.7px;top:220.2px;font-size:24px;color:#000;-webkit-text-stroke:0.25px #000;letter-spacing:0.45px;">5,642</div>
<div class="t" style="left:393.7px;top:220.2px;font-size:24px;color:#000;-webkit-text-stroke:0.25px #000;letter-spacing:0.45px;">1.950</div>
<div class="t" style="left:677.7px;top:220.2px;font-size:24px;color:#000;-webkit-text-stroke:0.25px #000;letter-spacing:0.45px;">2,836</div>
<div class="t" style="left:828.7px;top:220.2px;font-size:24px;color:#000;-webkit-text-stroke:0.25px #000;letter-spacing:0.45px;">3.879</div>
<div class="t" style="left:242.7px;top:255.2px;font-size:24px;color:#000;-webkit-text-stroke:0.25px #000;letter-spacing:0.45px;">6,431</div>
<div class="t" style="left:393.7px;top:255.2px;font-size:24px;color:#000;-webkit-text-stroke:0.25px #000;letter-spacing:0.45px;">1.710</div>
<div class="t" style="left:677.7px;top:255.2px;font-size:24px;color:#000;-webkit-text-stroke:0.25px #000;letter-spacing:0.45px;">2,488</div>
<div class="t" style="left:828.7px;top:255.2px;font-size:24px;color:#000;-webkit-text-stroke:0.25px #000;letter-spacing:0.45px;">4.422</div>
<div class="t" style="left:30.0px;top:290.8px;font-size:17.9px;color:#000;font-weight:bold;letter-spacing:-0.02px;">fecha</div>
<div class="t" style="left:175.0px;top:290.8px;font-size:17.9px;color:#000;font-weight:bold;letter-spacing:-0.08px;">accio.valor</div>
<div class="t" style="left:320.0px;top:290.8px;font-size:17.9px;color:#000;font-weight:bold;letter-spacing:-0.13px;">accio.compra</div>
<div class="t" style="left:465.0px;top:290.8px;font-size:17.9px;color:#000;font-weight:bold;letter-spacing:0.1px;">accio.venta</div>
<div class="t" style="left:610.0px;top:290.8px;font-size:17.9px;color:#000;font-weight:bold;letter-spacing:-0.32px;">saldo accio.</div>
<div class="t" style="left:755.0px;top:290.8px;font-size:17.9px;color:#000;font-weight:bold;letter-spacing:-0.13px;">euros compra</div>
<div class="t" style="left:900.0px;top:290.8px;font-size:17.9px;color:#000;font-weight:bold;letter-spacing:0.05px;">euros venta</div>
<div class="t" style="left:1045.0px;top:290.8px;font-size:17.9px;color:#000;font-weight:bold;letter-spacing:-0.25px;">saldo euros</div>
<div class="t" style="left:1335.0px;top:290.8px;font-size:17.9px;color:#000;font-weight:bold;letter-spacing:-0.0px;">saldo total</div>
<div class="t" style="left:33.7px;top:320.2px;font-size:24px;color:#000;-webkit-text-stroke:0.25px #000;letter-spacing:1.2px;">12/07/2012</div>
<div class="t" style="left:248.7px;top:320.2px;font-size:24px;color:#000;-webkit-text-stroke:0.25px #000;letter-spacing:0.45px;">3,494</div>
<div class="t" style="left:393.7px;top:320.2px;font-size:24px;color:#000;-webkit-text-stroke:0.25px #000;letter-spacing:0.45px;">2.862</div>
<div class="t" style="left:669.9px;top:320.2px;font-size:24px;color:#000;-webkit-text-stroke:0.25px #000;letter-spacing:0.45px;">20.730</div>
<div class="t" style="left:814.9px;top:320.2px;font-size:24px;color:#000;-webkit-text-stroke:0.25px #000;letter-spacing:0.45px;">10.000</div>
<div class="t" style="left:1104.9px;top:320.2px;font-size:24px;color:#000;-webkit-text-stroke:0.25px #000;letter-spacing:0.45px;">30.000</div>
<div class="t" style="left:1375.1px;top:320.2px;font-size:24px;color:#000;-webkit-text-stroke:0.25px #000;letter-spacing:0.45px;">102.431</div>
<div class="t" style="left:33.7px;top:355.2px;font-size:24px;color:#000;-webkit-text-stroke:0.25px #000;letter-spacing:1.2px;">18/07/2012</div>
<div class="t" style="left:248.7px;top:355.2px;font-size:24px;color:#000;-webkit-text-stroke:0.25px #000;letter-spacing:0.45px;">3,774</div>
<div class="t" style="left:538.7px;top:355.2px;font-size:24px;color:#000;-webkit-text-stroke:0.25px #000;letter-spacing:0.45px;">2.650</div>
<div class="t" style="left:669.9px;top:355.2px;font-size:24px;color:#000;-webkit-text-stroke:0.25px #000;letter-spacing:0.45px;">18.080</div>
<div class="t" style="left:959.9px;top:355.2px;font-size:24px;color:#000;-webkit-text-stroke:0.25px #000;letter-spacing:0.45px;">10.000</div>
<div class="t" style="left:1104.9px;top:355.2px;font-size:24px;color:#000;-webkit-text-stroke:0.25px #000;letter-spacing:0.45px;">40.000</div>
<div class="t" style="left:1375.1px;top:355.2px;font-size:24px;color:#000;-webkit-text-stroke:0.25px #000;letter-spacing:0.45px;">108.234</div>
<div class="t" style="left:33.7px;top:390.2px;font-size:24px;color:#000;-webkit-text-stroke:0.25px #000;letter-spacing:1.2px;">23/07/2012</div>
<div class="t" style="left:248.7px;top:390.2px;font-size:24px;color:#000;-webkit-text-stroke:0.25px #000;letter-spacing:0.45px;">3,494</div>
<div class="t" style="left:393.7px;top:390.2px;font-size:24px;color:#000;-webkit-text-stroke:0.25px #000;letter-spacing:0.45px;">2.862</div>
<div class="t" style="left:669.9px;top:390.2px;font-size:24px;color:#000;-webkit-text-stroke:0.25px #000;letter-spacing:0.45px;">20.942</div>
<div class="t" style="left:814.9px;top:390.2px;font-size:24px;color:#000;-webkit-text-stroke:0.25px #000;letter-spacing:0.45px;">10.000</div>
<div class="t" style="left:1104.9px;top:390.2px;font-size:24px;color:#000;-webkit-text-stroke:0.25px #000;letter-spacing:0.45px;">30.000</div>
<div class="t" style="left:1375.1px;top:390.2px;font-size:24px;color:#000;-webkit-text-stroke:0.25px #000;letter-spacing:0.45px;">103.171</div>
<div class="t" style="left:33.7px;top:425.2px;font-size:24px;color:#000;-webkit-text-stroke:0.25px #000;letter-spacing:1.2px;">23/07/2012</div>
<div class="t" style="left:248.7px;top:425.2px;font-size:24px;color:#000;-webkit-text-stroke:0.25px #000;letter-spacing:0.45px;">3,774</div>
<div class="t" style="left:538.7px;top:425.2px;font-size:24px;color:#000;-webkit-text-stroke:0.25px #000;letter-spacing:0.45px;">2.650</div>
<div class="t" style="left:669.9px;top:425.2px;font-size:24px;color:#000;-webkit-text-stroke:0.25px #000;letter-spacing:0.45px;">18.292</div>
<div class="t" style="left:959.9px;top:425.2px;font-size:24px;color:#000;-webkit-text-stroke:0.25px #000;letter-spacing:0.45px;">10.000</div>
<div class="t" style="left:1104.9px;top:425.2px;font-size:24px;color:#000;-webkit-text-stroke:0.25px #000;letter-spacing:0.45px;">40.000</div>
<div class="t" style="left:1375.1px;top:425.2px;font-size:24px;color:#000;-webkit-text-stroke:0.25px #000;letter-spacing:0.45px;">109.034</div>
<div class="t" style="left:33.7px;top:460.2px;font-size:24px;color:#000;-webkit-text-stroke:0.25px #000;letter-spacing:1.2px;">26/07/2012</div>
<div class="t" style="left:248.7px;top:460.2px;font-size:24px;color:#000;-webkit-text-stroke:0.25px #000;letter-spacing:0.45px;">4,000</div>
<div class="t" style="left:538.7px;top:460.2px;font-size:24px;color:#000;-webkit-text-stroke:0.25px #000;letter-spacing:0.45px;">2.500</div>
<div class="t" style="left:669.9px;top:460.2px;font-size:24px;color:#000;-webkit-text-stroke:0.25px #000;letter-spacing:0.45px;">15.792</div>
<div class="t" style="left:959.9px;top:460.2px;font-size:24px;color:#000;-webkit-text-stroke:0.25px #000;letter-spacing:0.45px;">10.000</div>
<div class="t" style="left:1104.9px;top:460.2px;font-size:24px;color:#000;-webkit-text-stroke:0.25px #000;letter-spacing:0.45px;">50.000</div>
<div class="t" style="left:1376.9px;top:460.2px;font-size:24px;color:#000;-webkit-text-stroke:0.25px #000;letter-spacing:0.45px;">113.168</div>
<div class="t" style="left:33.7px;top:495.2px;font-size:24px;color:#000;-webkit-text-stroke:0.25px #000;letter-spacing:1.2px;">26/07/2012</div>
<div class="t" style="left:248.7px;top:495.2px;font-size:24px;color:#000;-webkit-text-stroke:0.25px #000;letter-spacing:0.45px;">4,240</div>
<div class="t" style="left:538.7px;top:495.2px;font-size:24px;color:#000;-webkit-text-stroke:0.25px #000;letter-spacing:0.45px;">2.358</div>
<div class="t" style="left:669.9px;top:495.2px;font-size:24px;color:#000;-webkit-text-stroke:0.25px #000;letter-spacing:0.45px;">13.434</div>
<div class="t" style="left:959.9px;top:495.2px;font-size:24px;color:#000;-webkit-text-stroke:0.25px #000;letter-spacing:0.45px;">10.000</div>
<div class="t" style="left:1104.9px;top:495.2px;font-size:24px;color:#000;-webkit-text-stroke:0.25px #000;letter-spacing:0.45px;">60.000</div>
<div class="t" style="left:1376.9px;top:495.2px;font-size:24px;color:#000;-webkit-text-stroke:0.25px #000;letter-spacing:0.45px;">116.960</div>
<div class="t" style="left:33.7px;top:530.2px;font-size:24px;color:#000;-webkit-text-stroke:0.25px #000;letter-spacing:1.2px;">27/07/2012</div>
<div class="t" style="left:248.7px;top:530.2px;font-size:24px;color:#000;-webkit-text-stroke:0.25px #000;letter-spacing:0.45px;">4,000</div>
<div class="t" style="left:393.7px;top:530.2px;font-size:24px;color:#000;-webkit-text-stroke:0.25px #000;letter-spacing:0.45px;">2.500</div>
<div class="t" style="left:669.9px;top:530.2px;font-size:24px;color:#000;-webkit-text-stroke:0.25px #000;letter-spacing:0.45px;">15.934</div>
<div class="t" style="left:814.9px;top:530.2px;font-size:24px;color:#000;-webkit-text-stroke:0.25px #000;letter-spacing:0.45px;">10.000</div>
<div class="t" style="left:1104.9px;top:530.2px;font-size:24px;color:#000;-webkit-text-stroke:0.25px #000;letter-spacing:0.45px;">50.000</div>
<div class="t" style="left:1376.9px;top:530.2px;font-size:24px;color:#000;-webkit-text-stroke:0.25px #000;letter-spacing:0.45px;">113.736</div>
<div class="t" style="left:33.7px;top:565.2px;font-size:24px;color:#000;-webkit-text-stroke:0.25px #000;letter-spacing:1.2px;">27/07/2012</div>
<div class="t" style="left:248.7px;top:565.2px;font-size:24px;color:#000;-webkit-text-stroke:0.25px #000;letter-spacing:0.45px;">4,000</div>
<div class="t" style="left:538.7px;top:565.2px;font-size:24px;color:#000;-webkit-text-stroke:0.25px #000;letter-spacing:0.45px;">1.250</div>
<div class="t" style="left:669.9px;top:565.2px;font-size:24px;color:#000;-webkit-text-stroke:0.25px #000;letter-spacing:0.45px;">14.684</div>
<div class="t" style="left:973.7px;top:565.2px;font-size:24px;color:#000;-webkit-text-stroke:0.25px #000;letter-spacing:0.45px;">5.000</div>
<div class="t" style="left:1104.9px;top:565.2px;font-size:24px;color:#000;-webkit-text-stroke:0.25px #000;letter-spacing:0.45px;">55.000</div>
<div class="t" style="left:1376.9px;top:565.2px;font-size:24px;color:#000;-webkit-text-stroke:0.25px #000;letter-spacing:0.45px;">113.736</div>
<div class="t" style="left:33.7px;top:600.2px;font-size:24px;color:#000;-webkit-text-stroke:0.25px #000;letter-spacing:1.2px;">30/07/2012</div>
<div class="t" style="left:248.7px;top:600.2px;font-size:24px;color:#000;-webkit-text-stroke:0.25px #000;letter-spacing:0.45px;">4,240</div>
<div class="t" style="left:538.7px;top:600.2px;font-size:24px;color:#000;-webkit-text-stroke:0.25px #000;letter-spacing:0.45px;">2.594</div>
<div class="t" style="left:669.9px;top:600.2px;font-size:24px;color:#000;-webkit-text-stroke:0.25px #000;letter-spacing:0.45px;">12.090</div>
<div class="t" style="left:961.7px;top:600.2px;font-size:24px;color:#000;-webkit-text-stroke:0.25px #000;letter-spacing:0.45px;">11.000</div>
<div class="t" style="left:1104.9px;top:600.2px;font-size:24px;color:#000;-webkit-text-stroke:0.25px #000;letter-spacing:0.45px;">66.000</div>
<div class="t" style="left:1376.9px;top:600.2px;font-size:24px;color:#000;-webkit-text-stroke:0.25px #000;letter-spacing:0.45px;">117.262</div>
<div class="t" style="left:33.7px;top:635.2px;font-size:24px;color:#000;-webkit-text-stroke:0.25px #000;letter-spacing:1.2px;">31/07/2012</div>
<div class="t" style="left:248.7px;top:635.2px;font-size:24px;color:#000;-webkit-text-stroke:0.25px #000;letter-spacing:0.45px;">4,000</div>
<div class="t" style="left:393.7px;top:635.2px;font-size:24px;color:#000;-webkit-text-stroke:0.25px #000;letter-spacing:0.45px;">2.750</div>
<div class="t" style="left:669.9px;top:635.2px;font-size:24px;color:#000;-webkit-text-stroke:0.25px #000;letter-spacing:0.45px;">14.840</div>
<div class="t" style="left:816.7px;top:635.2px;font-size:24px;color:#000;-webkit-text-stroke:0.25px #000;letter-spacing:0.45px;">11.000</div>
<div class="t" style="left:1104.9px;top:635.2px;font-size:24px;color:#000;-webkit-text-stroke:0.25px #000;letter-spacing:0.45px;">55.000</div>
<div class="t" style="left:1376.9px;top:635.2px;font-size:24px;color:#000;-webkit-text-stroke:0.25px #000;letter-spacing:0.45px;">114.360</div>
<div class="t" style="left:33.7px;top:670.2px;font-size:24px;color:#000;-webkit-text-stroke:0.25px #000;letter-spacing:1.2px;">02/08/2012</div>
<div class="t" style="left:248.7px;top:670.2px;font-size:24px;color:#000;-webkit-text-stroke:0.25px #000;letter-spacing:0.45px;">3,774</div>
<div class="t" style="left:393.7px;top:670.2px;font-size:24px;color:#000;-webkit-text-stroke:0.25px #000;letter-spacing:0.45px;">2.915</div>
<div class="t" style="left:669.9px;top:670.2px;font-size:24px;color:#000;-webkit-text-stroke:0.25px #000;letter-spacing:0.45px;">17.755</div>
<div class="t" style="left:816.7px;top:670.2px;font-size:24px;color:#000;-webkit-text-stroke:0.25px #000;letter-spacing:0.45px;">11.000</div>
<div class="t" style="left:1104.9px;top:670.2px;font-size:24px;color:#000;-webkit-text-stroke:0.25px #000;letter-spacing:0.45px;">44.000</div>
<div class="t" style="left:1378.7px;top:670.2px;font-size:24px;color:#000;-webkit-text-stroke:0.25px #000;letter-spacing:0.45px;">111.007</div>
<div class="t" style="left:33.7px;top:705.2px;font-size:24px;color:#000;-webkit-text-stroke:0.25px #000;letter-spacing:1.2px;">03/08/2012</div>
<div class="t" style="left:248.7px;top:705.2px;font-size:24px;color:#000;-webkit-text-stroke:0.25px #000;letter-spacing:0.45px;">4,000</div>
<div class="t" style="left:538.7px;top:705.2px;font-size:24px;color:#000;-webkit-text-stroke:0.25px #000;letter-spacing:0.45px;">2.750</div>
<div class="t" style="left:669.9px;top:705.2px;font-size:24px;color:#000;-webkit-text-stroke:0.25px #000;letter-spacing:0.45px;">15.005</div>
<div class="t" style="left:961.7px;top:705.2px;font-size:24px;color:#000;-webkit-text-stroke:0.25px #000;letter-spacing:0.45px;">11.000</div>
<div class="t" style="left:1104.9px;top:705.2px;font-size:24px;color:#000;-webkit-text-stroke:0.25px #000;letter-spacing:0.45px;">55.000</div>
<div class="t" style="left:1376.9px;top:705.2px;font-size:24px;color:#000;-webkit-text-stroke:0.25px #000;letter-spacing:0.45px;">115.020</div>
<div class="t" style="left:33.7px;top:740.2px;font-size:24px;color:#000;-webkit-text-stroke:0.25px #000;letter-spacing:1.2px;">14/08/2012</div>
<div class="t" style="left:248.7px;top:740.2px;font-size:24px;color:#000;-webkit-text-stroke:0.25px #000;letter-spacing:0.45px;">4,240</div>
<div class="t" style="left:538.7px;top:740.2px;font-size:24px;color:#000;-webkit-text-stroke:0.25px #000;letter-spacing:0.45px;">2.594</div>
<div class="t" style="left:671.7px;top:740.2px;font-size:24px;color:#000;-webkit-text-stroke:0.25px #000;letter-spacing:0.45px;">12.411</div>
<div class="t" style="left:961.7px;top:740.2px;font-size:24px;color:#000;-webkit-text-stroke:0.25px #000;letter-spacing:0.45px;">11.000</div>
<div class="t" style="left:1104.9px;top:740.2px;font-size:24px;color:#000;-webkit-text-stroke:0.25px #000;letter-spacing:0.45px;">66.000</div>
<div class="t" style="left:1376.9px;top:740.2px;font-size:24px;color:#000;-webkit-text-stroke:0.25px #000;letter-spacing:0.45px;">118.623</div>
<div class="t" style="left:1527.7px;top:749.2px;font-size:13.3px;color:#000;letter-spacing:0px;">4,74</div>
<div class="t" style="left:33.7px;top:775.2px;font-size:24px;color:#000;-webkit-text-stroke:0.25px #000;letter-spacing:1.2px;">07/09/2012</div>
<div class="t" style="left:248.7px;top:775.2px;font-size:24px;color:#000;-webkit-text-stroke:0.25px #000;letter-spacing:0.45px;">4,579</div>
<div class="t" style="left:538.7px;top:775.2px;font-size:24px;color:#000;-webkit-text-stroke:0.25px #000;letter-spacing:0.45px;">2.402</div>
<div class="t" style="left:669.9px;top:775.2px;font-size:24px;color:#000;-webkit-text-stroke:0.25px #000;letter-spacing:0.45px;">10.009</div>
<div class="t" style="left:961.7px;top:775.2px;font-size:24px;color:#000;-webkit-text-stroke:0.25px #000;letter-spacing:0.45px;">11.000</div>
<div class="t" style="left:1104.9px;top:775.2px;font-size:24px;color:#000;-webkit-text-stroke:0.25px #000;letter-spacing:0.45px;">77.000</div>
<div class="t" style="left:1375.1px;top:775.2px;font-size:24px;color:#000;-webkit-text-stroke:0.25px #000;letter-spacing:0.45px;">122.831</div>
<div class="t" style="left:1527.7px;top:784.2px;font-size:13.3px;color:#000;letter-spacing:0px;">4,91</div>
<div class="t" style="left:33.7px;top:810.2px;font-size:24px;color:#000;-webkit-text-stroke:0.25px #000;letter-spacing:1.2px;">27/09/2012</div>
<div class="t" style="left:248.7px;top:810.2px;font-size:24px;color:#000;-webkit-text-stroke:0.25px #000;letter-spacing:0.45px;">4,240</div>
<div class="t" style="left:393.7px;top:810.2px;font-size:24px;color:#000;-webkit-text-stroke:0.25px #000;letter-spacing:0.45px;">2.594</div>
<div class="t" style="left:669.9px;top:810.2px;font-size:24px;color:#000;-webkit-text-stroke:0.25px #000;letter-spacing:0.45px;">12.603</div>
<div class="t" style="left:816.7px;top:810.2px;font-size:24px;color:#000;-webkit-text-stroke:0.25px #000;letter-spacing:0.45px;">11.000</div>
<div class="t" style="left:1104.9px;top:810.2px;font-size:24px;color:#000;-webkit-text-stroke:0.25px #000;letter-spacing:0.45px;">66.000</div>
<div class="t" style="left:1376.9px;top:810.2px;font-size:24px;color:#000;-webkit-text-stroke:0.25px #000;letter-spacing:0.45px;">119.437</div>
<div class="t" style="left:1527.7px;top:819.2px;font-size:13.3px;color:#000;letter-spacing:0px;">4,78</div>
<div class="t" style="left:35.5px;top:845.2px;font-size:24px;color:#000;-webkit-text-stroke:0.25px #000;letter-spacing:1.2px;">11/10/2012</div>
<div class="t" style="left:248.7px;top:845.2px;font-size:24px;color:#000;-webkit-text-stroke:0.25px #000;letter-spacing:0.45px;">4,000</div>
<div class="t" style="left:393.7px;top:845.2px;font-size:24px;color:#000;-webkit-text-stroke:0.25px #000;letter-spacing:0.45px;">2.750</div>
<div class="t" style="left:669.9px;top:845.2px;font-size:24px;color:#000;-webkit-text-stroke:0.25px #000;letter-spacing:0.45px;">15.353</div>
<div class="t" style="left:816.7px;top:845.2px;font-size:24px;color:#000;-webkit-text-stroke:0.25px #000;letter-spacing:0.45px;">11.000</div>
<div class="t" style="left:1104.9px;top:845.2px;font-size:24px;color:#000;-webkit-text-stroke:0.25px #000;letter-spacing:0.45px;">55.000</div>
<div class="t" style="left:1376.9px;top:845.2px;font-size:24px;color:#000;-webkit-text-stroke:0.25px #000;letter-spacing:0.45px;">116.412</div>
<div class="t" style="left:1527.7px;top:854.2px;font-size:13.3px;color:#000;letter-spacing:0px;">4,66</div>
<div class="t" style="left:33.7px;top:880.2px;font-size:24px;color:#000;-webkit-text-stroke:0.25px #000;letter-spacing:1.2px;">17/10/2012</div>
<div class="t" style="left:248.7px;top:880.2px;font-size:24px;color:#000;-webkit-text-stroke:0.25px #000;letter-spacing:0.45px;">4,240</div>
<div class="t" style="left:538.7px;top:880.2px;font-size:24px;color:#000;-webkit-text-stroke:0.25px #000;letter-spacing:0.45px;">2.594</div>
<div class="t" style="left:669.9px;top:880.2px;font-size:24px;color:#000;-webkit-text-stroke:0.25px #000;letter-spacing:0.45px;">12.759</div>
<div class="t" style="left:961.7px;top:880.2px;font-size:24px;color:#000;-webkit-text-stroke:0.25px #000;letter-spacing:0.45px;">11.000</div>
<div class="t" style="left:1104.9px;top:880.2px;font-size:24px;color:#000;-webkit-text-stroke:0.25px #000;letter-spacing:0.45px;">66.000</div>
<div class="t" style="left:1375.1px;top:880.2px;font-size:24px;color:#000;-webkit-text-stroke:0.25px #000;letter-spacing:0.45px;">120.098</div>
<div class="t" style="left:1527.7px;top:889.2px;font-size:13.3px;color:#000;letter-spacing:0px;">4,80</div>
<div class="t" style="left:33.7px;top:915.2px;font-size:24px;color:#000;-webkit-text-stroke:0.25px #000;letter-spacing:1.2px;">03/12/2012</div>
<div class="t" style="left:248.7px;top:915.2px;font-size:24px;color:#000;-webkit-text-stroke:0.25px #000;letter-spacing:0.45px;">4,579</div>
<div class="t" style="left:538.7px;top:915.2px;font-size:24px;color:#000;-webkit-text-stroke:0.25px #000;letter-spacing:0.45px;">2.402</div>
<div class="t" style="left:669.9px;top:915.2px;font-size:24px;color:#000;-webkit-text-stroke:0.25px #000;letter-spacing:0.45px;">10.357</div>
<div class="t" style="left:961.7px;top:915.2px;font-size:24px;color:#000;-webkit-text-stroke:0.25px #000;letter-spacing:0.45px;">11.000</div>
<div class="t" style="left:1104.9px;top:915.2px;font-size:24px;color:#000;-webkit-text-stroke:0.25px #000;letter-spacing:0.45px;">77.000</div>
<div class="t" style="left:1375.1px;top:915.2px;font-size:24px;color:#000;-webkit-text-stroke:0.25px #000;letter-spacing:0.45px;">124.425</div>
<div class="t" style="left:1527.7px;top:924.2px;font-size:13.3px;color:#000;letter-spacing:0px;">4,98</div>
<div class="a" style="left:170px;top:20px;width:2px;height:53px;background:#000;"></div>
<div class="a" style="left:170px;top:71px;width:726px;height:2px;background:#000;"></div>
<div class="a" style="left:894px;top:20px;width:2px;height:53px;background:#000;"></div>
<div class="a" style="left:25px;top:282px;width:1161px;height:2px;background:#000;"></div>
<div class="a" style="left:25px;top:311px;width:1161px;height:2px;background:#000;"></div>
<div class="a" style="left:25px;top:312px;width:1880px;height:1px;background:#000;background:#3c3c3c"></div>
<div class="a" style="left:1184px;top:282px;width:2px;height:31px;background:#000;"></div>
<div class="a" style="left:1330px;top:282px;width:146px;height:2px;background:#000;"></div>
<div class="a" style="left:1330px;top:311px;width:146px;height:2px;background:#000;"></div>
<div class="a" style="left:1330px;top:282px;width:2px;height:31px;background:#000;"></div>
<div class="a" style="left:1474px;top:282px;width:2px;height:31px;background:#000;"></div>
<div class="a" style="left:1329px;top:906px;width:142px;height:31px;border:3px solid #000"></div>
<div class="a" style="left:1472px;top:939px;width:6px;height:6px;background:#000;border:1px solid #fff;border-right:none;border-bottom:none"></div>
<svg style="left:1433px;top:313px" width="480" height="440" viewBox="1433 481 480 440">
<rect x="1433.5" y="480.5" width="466" height="438" fill="#fff" stroke="#868686" stroke-width="1"/>
<path d="M1483.0 491.5 H1802.0" stroke="#868686" stroke-width="1"/><text x="1471.500" y="495.7" text-anchor="end" font-family="Liberation Sans, sans-serif" font-size="12.200" fill="#000">5,000</text>
<path d="M1487.5 495.5 h3" stroke="#868686" stroke-width="0.800"/><path d="M1487.5 499.5 h3" stroke="#868686" stroke-width="0.800"/><path d="M1487.5 503.5 h3" stroke="#868686" stroke-width="0.800"/><path d="M1487.5 507.5 h3" stroke="#868686" stroke-width="0.800"/><path d="M1483.0 511.5 H1802.0" stroke="#868686" stroke-width="1"/><text x="1471.500" y="515.7" text-anchor="end" font-family="Liberation Sans, sans-serif" font-size="12.200" fill="#000">4,900</text>
<path d="M1487.5 515.0 h3" stroke="#868686" stroke-width="0.800"/><path d="M1487.5 519.0 h3" stroke="#868686" stroke-width="0.800"/><path d="M1487.5 523.0 h3" stroke="#868686" stroke-width="0.800"/><path d="M1487.5 527.0 h3" stroke="#868686" stroke-width="0.800"/><path d="M1483.0 530.5 H1802.0" stroke="#868686" stroke-width="1"/><text x="1471.500" y="534.7" text-anchor="end" font-family="Liberation Sans, sans-serif" font-size="12.200" fill="#000">4,800</text>
<path d="M1487.5 535.0 h3" stroke="#868686" stroke-width="0.800"/><path d="M1487.5 539.0 h3" stroke="#868686" stroke-width="0.800"/><path d="M1487.5 542.5 h3" stroke="#868686" stroke-width="0.800"/><path d="M1487.5 546.5 h3" stroke="#868686" stroke-width="0.800"/><path d="M1483.0 550.5 H1802.0" stroke="#868686" stroke-width="1"/><text x="1471.500" y="554.7" text-anchor="end" font-family="Liberation Sans, sans-serif" font-size="12.200" fill="#000">4,700</text>
<path d="M1487.5 554.5 h3" stroke="#868686" stroke-width="0.800"/><path d="M1487.5 558.5 h3" stroke="#868686" stroke-width="0.800"/><path d="M1487.5 562.5 h3" stroke="#868686" stroke-width="0.800"/><path d="M1487.5 566.5 h3" stroke="#868686" stroke-width="0.800"/><path d="M1483.0 570.5 H1802.0" stroke="#868686" stroke-width="1"/><text x="1471.500" y="574.7" text-anchor="end" font-family="Liberation Sans, sans-serif" font-size="12.200" fill="#000">4,600</text>
<path d="M1487.5 574.0 h3" stroke="#868686" stroke-width="0.800"/><path d="M1487.5 578.0 h3" stroke="#868686" stroke-width="0.800"/><path d="M1487.5 582.0 h3" stroke="#868686" stroke-width="0.800"/><path d="M1487.5 586.0 h3" stroke="#868686" stroke-width="0.800"/><path d="M1483.0 590.5 H1802.0" stroke="#868686" stroke-width="1"/><text x="1471.500" y="594.7" text-anchor="end" font-family="Liberation Sans, sans-serif" font-size="12.200" fill="#000">4,500</text>
<path d="M1487.5 594.0 h3" stroke="#868686" stroke-width="0.800"/><path d="M1487.5 598.0 h3" stroke="#868686" stroke-width="0.800"/><path d="M1487.5 602.0 h3" stroke="#868686" stroke-width="0.800"/><path d="M1487.5 606.0 h3" stroke="#868686" stroke-width="0.800"/><path d="M1483.0 609.5 H1802.0" stroke="#868686" stroke-width="1"/><text x="1471.500" y="613.7" text-anchor="end" font-family="Liberation Sans, sans-serif" font-size="12.200" fill="#000">4,400</text>
<path d="M1487.5 613.5 h3" stroke="#868686" stroke-width="0.800"/><path d="M1487.5 617.5 h3" stroke="#868686" stroke-width="0.800"/><path d="M1487.5 621.5 h3" stroke="#868686" stroke-width="0.800"/><path d="M1487.5 625.5 h3" stroke="#868686" stroke-width="0.800"/><path d="M1483.0 629.5 H1802.0" stroke="#868686" stroke-width="1"/><text x="1471.500" y="633.7" text-anchor="end" font-family="Liberation Sans, sans-serif" font-size="12.200" fill="#000">4,300</text>
<path d="M1487.5 633.5 h3" stroke="#868686" stroke-width="0.800"/><path d="M1487.5 637.5 h3" stroke="#868686" stroke-width="0.800"/><path d="M1487.5 641.0 h3" stroke="#868686" stroke-width="0.800"/><path d="M1487.5 645.0 h3" stroke="#868686" stroke-width="0.800"/><path d="M1483.0 649.5 H1802.0" stroke="#868686" stroke-width="1"/><text x="1471.500" y="653.7" text-anchor="end" font-family="Liberation Sans, sans-serif" font-size="12.200" fill="#000">4,200</text>
<path d="M1487.5 653.0 h3" stroke="#868686" stroke-width="0.800"/><path d="M1487.5 657.0 h3" stroke="#868686" stroke-width="0.800"/><path d="M1487.5 661.0 h3" stroke="#868686" stroke-width="0.800"/><path d="M1487.5 665.0 h3" stroke="#868686" stroke-width="0.800"/><path d="M1483.0 668.5 H1802.0" stroke="#868686" stroke-width="1"/><text x="1471.500" y="672.7" text-anchor="end" font-family="Liberation Sans, sans-serif" font-size="12.200" fill="#000">4,100</text>
<path d="M1487.5 672.5 h3" stroke="#868686" stroke-width="0.800"/><path d="M1487.5 676.5 h3" stroke="#868686" stroke-width="0.800"/><path d="M1487.5 680.5 h3" stroke="#868686" stroke-width="0.800"/><path d="M1487.5 684.5 h3" stroke="#868686" stroke-width="0.800"/><path d="M1483.0 688.5 H1802.0" stroke="#868686" stroke-width="1"/><text x="1471.500" y="692.7" text-anchor="end" font-family="Liberation Sans, sans-serif" font-size="12.200" fill="#000">4,000</text>
<path d="M1487.5 692.5 h3" stroke="#868686" stroke-width="0.800"/><path d="M1487.5 696.5 h3" stroke="#868686" stroke-width="0.800"/><path d="M1487.5 700.5 h3" stroke="#868686" stroke-width="0.800"/><path d="M1487.5 704.5 h3" stroke="#868686" stroke-width="0.800"/><path d="M1483.0 708.5 H1802.0" stroke="#868686" stroke-width="1"/><text x="1471.500" y="712.7" text-anchor="end" font-family="Liberation Sans, sans-serif" font-size="12.200" fill="#000">3,900</text>
<path d="M1487.5 712.0 h3" stroke="#868686" stroke-width="0.800"/><path d="M1487.5 716.0 h3" stroke="#868686" stroke-width="0.800"/><path d="M1487.5 720.0 h3" stroke="#868686" stroke-width="0.800"/><path d="M1487.5 724.0 h3" stroke="#868686" stroke-width="0.800"/><path d="M1483.0 727.5 H1802.0" stroke="#868686" stroke-width="1"/><text x="1471.500" y="731.7" text-anchor="end" font-family="Liberation Sans, sans-serif" font-size="12.200" fill="#000">3,800</text>
<path d="M1487.5 732.0 h3" stroke="#868686" stroke-width="0.800"/><path d="M1487.5 736.0 h3" stroke="#868686" stroke-width="0.800"/><path d="M1487.5 739.5 h3" stroke="#868686" stroke-width="0.800"/><path d="M1487.5 743.5 h3" stroke="#868686" stroke-width="0.800"/><path d="M1483.0 747.5 H1802.0" stroke="#868686" stroke-width="1"/><text x="1471.500" y="751.7" text-anchor="end" font-family="Liberation Sans, sans-serif" font-size="12.200" fill="#000">3,700</text>
<path d="M1487.5 751.5 h3" stroke="#868686" stroke-width="0.800"/><path d="M1487.5 755.5 h3" stroke="#868686" stroke-width="0.800"/><path d="M1487.5 759.5 h3" stroke="#868686" stroke-width="0.800"/><path d="M1487.5 763.5 h3" stroke="#868686" stroke-width="0.800"/><path d="M1483.0 767.5 H1802.0" stroke="#868686" stroke-width="1"/><text x="1471.500" y="771.7" text-anchor="end" font-family="Liberation Sans, sans-serif" font-size="12.200" fill="#000">3,600</text>
<path d="M1487.5 771.0 h3" stroke="#868686" stroke-width="0.800"/><path d="M1487.5 775.0 h3" stroke="#868686" stroke-width="0.800"/><path d="M1487.5 779.0 h3" stroke="#868686" stroke-width="0.800"/><path d="M1487.5 783.0 h3" stroke="#868686" stroke-width="0.800"/><path d="M1483.0 787.5 H1802.0" stroke="#868686" stroke-width="1"/><text x="1471.500" y="791.7" text-anchor="end" font-family="Liberation Sans, sans-serif" font-size="12.200" fill="#000">3,500</text>
<path d="M1487.5 791.0 h3" stroke="#868686" stroke-width="0.800"/><path d="M1487.5 795.0 h3" stroke="#868686" stroke-width="0.800"/><path d="M1487.5 799.0 h3" stroke="#868686" stroke-width="0.800"/><path d="M1487.5 803.0 h3" stroke="#868686" stroke-width="0.800"/><path d="M1483.0 806.5 H1802.0" stroke="#868686" stroke-width="1"/><text x="1471.500" y="810.7" text-anchor="end" font-family="Liberation Sans, sans-serif" font-size="12.200" fill="#000">3,400</text>
<path d="M1487.5 810.5 h3" stroke="#868686" stroke-width="0.800"/><path d="M1487.5 814.5 h3" stroke="#868686" stroke-width="0.800"/><path d="M1487.5 818.5 h3" stroke="#868686" stroke-width="0.800"/><path d="M1487.5 822.5 h3" stroke="#868686" stroke-width="0.800"/><path d="M1483.0 826.5 H1802.0" stroke="#868686" stroke-width="1"/><text x="1471.500" y="830.7" text-anchor="end" font-family="Liberation Sans, sans-serif" font-size="12.200" fill="#000">3,300</text>
<path d="M1487.5 830.5 h3" stroke="#868686" stroke-width="0.800"/><path d="M1487.5 834.5 h3" stroke="#868686" stroke-width="0.800"/><path d="M1487.5 838.0 h3" stroke="#868686" stroke-width="0.800"/><path d="M1487.5 842.0 h3" stroke="#868686" stroke-width="0.800"/><path d="M1483.0 846.5 H1802.0" stroke="#868686" stroke-width="1"/><text x="1471.500" y="850.7" text-anchor="end" font-family="Liberation Sans, sans-serif" font-size="12.200" fill="#000">3,200</text>
<path d="M1487.5 850.0 h3" stroke="#868686" stroke-width="0.800"/><path d="M1487.5 854.0 h3" stroke="#868686" stroke-width="0.800"/><path d="M1487.5 858.0 h3" stroke="#868686" stroke-width="0.800"/><path d="M1487.5 862.0 h3" stroke="#868686" stroke-width="0.800"/><path d="M1483.0 865.5 H1802.0" stroke="#868686" stroke-width="1"/><text x="1471.500" y="869.7" text-anchor="end" font-family="Liberation Sans, sans-serif" font-size="12.200" fill="#000">3,100</text>
<path d="M1487.5 869.5 h3" stroke="#868686" stroke-width="0.800"/><path d="M1487.5 873.5 h3" stroke="#868686" stroke-width="0.800"/><path d="M1487.5 877.5 h3" stroke="#868686" stroke-width="0.800"/><path d="M1487.5 881.5 h3" stroke="#868686" stroke-width="0.800"/><path d="M1483.0 885.5 H1802.0" stroke="#868686" stroke-width="1"/><text x="1471.500" y="889.7" text-anchor="end" font-family="Liberation Sans, sans-serif" font-size="12.200" fill="#000">3,000</text>
<path d="M1487.5 481.5 V885.5" stroke="#868686" stroke-width="1"/><path d="M1487.5 488.0 h3" stroke="#868686" stroke-width="0.800"/><path d="M1487.5 484.0 h3" stroke="#868686" stroke-width="0.800"/><path d="M1487.5 885.5 H1802.0" stroke="#868686" stroke-width="1"/>
<path d="M1487.5 885.5 v4" stroke="#868686" stroke-width="0.900"/><path d="M1494.5 885.5 v4" stroke="#868686" stroke-width="0.900"/><path d="M1501.5 885.5 v4" stroke="#868686" stroke-width="0.900"/><path d="M1508.5 885.5 v4" stroke="#868686" stroke-width="0.900"/><path d="M1515.5 885.5 v4" stroke="#868686" stroke-width="0.900"/><path d="M1522.5 885.5 v4" stroke="#868686" stroke-width="0.900"/><path d="M1529.5 885.5 v4" stroke="#868686" stroke-width="0.900"/><path d="M1536.5 885.5 v4" stroke="#868686" stroke-width="0.900"/><path d="M1543.5 885.5 v4" stroke="#868686" stroke-width="0.900"/><path d="M1550.5 885.5 v4" stroke="#868686" stroke-width="0.900"/><path d="M1557.5 885.5 v4" stroke="#868686" stroke-width="0.900"/><path d="M1564.5 885.5 v4" stroke="#868686" stroke-width="0.900"/><path d="M1571.5 885.5 v4" stroke="#868686" stroke-width="0.900"/><path d="M1578.5 885.5 v4" stroke="#868686" stroke-width="0.900"/><path d="M1585.5 885.5 v4" stroke="#868686" stroke-width="0.900"/><path d="M1592.5 885.5 v4" stroke="#868686" stroke-width="0.900"/><path d="M1599.5 885.5 v4" stroke="#868686" stroke-width="0.900"/><path d="M1606.5 885.5 v4" stroke="#868686" stroke-width="0.900"/><path d="M1613.5 885.5 v4" stroke="#868686" stroke-width="0.900"/><path d="M1620.5 885.5 v4" stroke="#868686" stroke-width="0.900"/><path d="M1627.5 885.5 v4" stroke="#868686" stroke-width="0.900"/><path d="M1634.5 885.5 v4" stroke="#868686" stroke-width="0.900"/><path d="M1641.5 885.5 v4" stroke="#868686" stroke-width="0.900"/><path d="M1648.5 885.5 v4" stroke="#868686" stroke-width="0.900"/><path d="M1655.5 885.5 v4" stroke="#868686" stroke-width="0.900"/><path d="M1662.5 885.5 v4" stroke="#868686" stroke-width="0.900"/><path d="M1669.5 885.5 v4" stroke="#868686" stroke-width="0.900"/><path d="M1676.5 885.5 v4" stroke="#868686" stroke-width="0.900"/><path d="M1683.5 885.5 v4" stroke="#868686" stroke-width="0.900"/><path d="M1690.5 885.5 v4" stroke="#868686" stroke-width="0.900"/><path d="M1697.5 885.5 v4" stroke="#868686" stroke-width="0.900"/><path d="M1704.5 885.5 v4" stroke="#868686" stroke-width="0.900"/><path d="M1711.5 885.5 v4" stroke="#868686" stroke-width="0.900"/><path d="M1718.5 885.5 v4" stroke="#868686" stroke-width="0.900"/><path d="M1725.5 885.5 v4" stroke="#868686" stroke-width="0.900"/><path d="M1732.5 885.5 v4" stroke="#868686" stroke-width="0.900"/><path d="M1739.5 885.5 v4" stroke="#868686" stroke-width="0.900"/><path d="M1746.5 885.5 v4" stroke="#868686" stroke-width="0.900"/><path d="M1753.5 885.5 v4" stroke="#868686" stroke-width="0.900"/><path d="M1760.5 885.5 v4" stroke="#868686" stroke-width="0.900"/><path d="M1767.5 885.5 v4" stroke="#868686" stroke-width="0.900"/><path d="M1774.5 885.5 v4" stroke="#868686" stroke-width="0.900"/><path d="M1781.5 885.5 v4" stroke="#868686" stroke-width="0.900"/><path d="M1788.5 885.5 v4" stroke="#868686" stroke-width="0.900"/><path d="M1795.5 885.5 v4" stroke="#868686" stroke-width="0.900"/><path d="M1802.5 885.5 v4" stroke="#868686" stroke-width="0.900"/>
<text x="1491.0" y="908" text-anchor="middle" font-family="Liberation Sans, sans-serif" font-size="12.200" fill="#000">1</text><text x="1505.0" y="908" text-anchor="middle" font-family="Liberation Sans, sans-serif" font-size="12.200" fill="#000">3</text><text x="1519.0" y="908" text-anchor="middle" font-family="Liberation Sans, sans-serif" font-size="12.200" fill="#000">5</text><text x="1532.9" y="908" text-anchor="middle" font-family="Liberation Sans, sans-serif" font-size="12.200" fill="#000">7</text><text x="1546.9" y="908" text-anchor="middle" font-family="Liberation Sans, sans-serif" font-size="12.200" fill="#000">9</text><text x="1560.9" y="908" text-anchor="middle" font-family="Liberation Sans, sans-serif" font-size="12.200" fill="#000">11</text><text x="1574.9" y="908" text-anchor="middle" font-family="Liberation Sans, sans-serif" font-size="12.200" fill="#000">13</text><text x="1588.8" y="908" text-anchor="middle" font-family="Liberation Sans, sans-serif" font-size="12.200" fill="#000">15</text><text x="1602.8" y="908" text-anchor="middle" font-family="Liberation Sans, sans-serif" font-size="12.200" fill="#000">17</text><text x="1616.8" y="908" text-anchor="middle" font-family="Liberation Sans, sans-serif" font-size="12.200" fill="#000">19</text><text x="1630.8" y="908" text-anchor="middle" font-family="Liberation Sans, sans-serif" font-size="12.200" fill="#000">21</text><text x="1644.8" y="908" text-anchor="middle" font-family="Liberation Sans, sans-serif" font-size="12.200" fill="#000">23</text><text x="1658.7" y="908" text-anchor="middle" font-family="Liberation Sans, sans-serif" font-size="12.200" fill="#000">25</text><text x="1672.7" y="908" text-anchor="middle" font-family="Liberation Sans, sans-serif" font-size="12.200" fill="#000">27</text><text x="1686.7" y="908" text-anchor="middle" font-family="Liberation Sans, sans-serif" font-size="12.200" fill="#000">29</text><text x="1700.7" y="908" text-anchor="middle" font-family="Liberation Sans, sans-serif" font-size="12.200" fill="#000">31</text><text x="1714.6" y="908" text-anchor="middle" font-family="Liberation Sans, sans-serif" font-size="12.200" fill="#000">33</text><text x="1728.6" y="908" text-anchor="middle" font-family="Liberation Sans, sans-serif" font-size="12.200" fill="#000">35</text><text x="1742.6" y="908" text-anchor="middle" font-family="Liberation Sans, sans-serif" font-size="12.200" fill="#000">37</text><text x="1756.6" y="908" text-anchor="middle" font-family="Liberation Sans, sans-serif" font-size="12.200" fill="#000">39</text><text x="1770.5" y="908" text-anchor="middle" font-family="Liberation Sans, sans-serif" font-size="12.200" fill="#000">41</text><text x="1784.5" y="908" text-anchor="middle" font-family="Liberation Sans, sans-serif" font-size="12.200" fill="#000">43</text><text x="1798.5" y="908" text-anchor="middle" font-family="Liberation Sans, sans-serif" font-size="12.200" fill="#000">45</text>
<polyline points="1491.0,688.5 1498.0,733.0 1505.0,688.5 1512.0,641.2 1519.0,574.4 1525.9,641.2 1532.9,574.4 1539.9,641.2 1546.9,688.5 1553.9,641.2 1560.9,574.4 1567.9,641.2 1574.9,574.4 1581.8,641.2 1588.8,688.5 1595.8,733.0 1602.8,788.2 1609.8,788.2 1616.8,733.0 1623.8,788.2 1630.8,733.0 1637.8,688.5 1644.8,733.0 1651.7,688.5 1658.7,733.0 1665.7,788.2 1672.7,733.0 1679.7,788.2 1686.7,733.0 1693.7,788.2 1700.7,733.0 1707.7,688.5 1714.6,641.2 1721.6,688.5 1728.6,688.5 1735.6,641.2 1742.6,688.5 1749.6,733.0 1756.6,688.5 1763.6,641.2 1770.5,574.4 1777.5,641.2 1784.5,688.5 1791.5,641.2 1798.5,574.4" fill="none" stroke="#4a7ebb" stroke-width="2.800" stroke-linejoin="round" stroke-linecap="round"/>
<polyline points="1491.0,688.5 1498.0,711.0 1505.0,684.6 1512.0,659.0 1519.0,632.9 1525.9,655.0 1532.9,627.0 1539.9,648.1 1546.9,669.6 1553.9,642.2 1560.9,615.0 1567.9,638.1 1574.9,608.9 1581.8,629.4 1588.8,651.1 1595.8,676.7 1602.8,714.1 1609.8,696.6 1616.8,652.1 1623.8,690.1 1630.8,646.5 1637.8,615.0 1644.8,641.0 1651.7,609.7 1658.7,636.5 1665.7,675.9 1672.7,629.6 1679.7,669.4 1686.7,623.7 1693.7,663.5 1700.7,617.4 1707.7,584.7 1714.6,554.9 1721.6,580.3 1728.6,580.3 1735.6,552.6 1742.6,575.4 1749.6,601.8 1756.6,570.1 1763.6,541.7 1770.5,508.6 1777.5,535.4 1784.5,559.3 1791.5,530.1 1798.5,496.0" fill="none" stroke="#be4b48" stroke-width="2.800" stroke-linejoin="round" stroke-linecap="round"/>
<path d="M1828.500 582.500 H1855" stroke="#4a7ebb" stroke-width="2.800" stroke-linecap="round"/><path d="M1828.500 606.500 H1855" stroke="#be4b48" stroke-width="2.800" stroke-linecap="round"/><text x="1857" y="587" font-family="Liberation Sans, sans-serif" font-size="12.200" fill="#000">Series1</text><text x="1857" y="611" font-family="Liberation Sans, sans-serif" font-size="12.200" fill="#000">Series2</text>
</svg>
</div>
<div class="a" style="left:1900px;top:168px;width:16px;height:954px;background:linear-gradient(90deg,#a9c1e2 0,#8fabd4 2px,#7a9bca 5px,#7c9dcb 60%,#86a5d0 100%)"></div>
<div class="a" style="left:1916px;top:168px;width:4px;height:992px;background:#afc9ee"></div>
<svg style="left:1904px;top:174px" width="10" height="6"><path d="M0 5.500 h9.500 l-4.750 -5.500z" fill="#4c5a7d"/></svg>
<div class="a" style="left:1901px;top:745px;width:14px;height:360px;box-sizing:border-box;border:1px solid #5a6f9e;border-radius:2px;background:linear-gradient(90deg,#e9edf3 0,#e6eaf1 45%,#c3cfe2 55%,#bccade 85%,#d5deeb 100%)"></div>
<svg style="left:1904px;top:920px" width="8" height="8"><path d="M0 0.500 h8 M0 2.500 h8 M0 4.500 h8 M0 6.500 h8" stroke="#6f83ab" stroke-width="1"/></svg>
<svg style="left:1904px;top:1111px" width="10" height="6"><path d="M0 0 h9.500 l-4.750 5.500z" fill="#4c5a7d"/></svg>
<div class="a" style="left:0;top:1122px;width:1916px;height:16px;background:linear-gradient(#86a4d4 0,#92aedb 50%,#a6bfe6 100%)"></div>
<div class="a" style="left:0;top:1122px;width:62px;height:16px;background:linear-gradient(#d5e3f7 0,#c6d9f4 35%,#adc6ec 45%,#bdd2f1 100%)"></div>
<div class="a" style="left:0;top:1138px;width:1916px;height:1px;background:#6a8cc4"></div>
<svg style="left:5px;top:1125px" width="54" height="10" viewBox="0 0 54 10">
<path d="M1 0.500 v9" stroke="#1f3f8f" stroke-width="1.600"/><path d="M7 0.500 v9 l-4.500 -4.500z" fill="#1f3f8f"/>
<path d="M21 0.500 v9 l-4.500 -4.500z" fill="#1f3f8f"/>
<path d="M31 0.500 v9 l4.500 -4.500z" fill="#1f3f8f"/>
<path d="M45 0.500 v9 l4.500 -4.500z" fill="#1f3f8f"/><path d="M51 0.500 v9" stroke="#1f3f8f" stroke-width="1.600"/>
</svg>
<svg style="left:0;top:0" width="400" height="1200"><defs><linearGradient id="tg" x1="0" y1="0" x2="0" y2="1"><stop offset="0" stop-color="#dbe7f8"/><stop offset=".4" stop-color="#cdddf5"/><stop offset=".5" stop-color="#b3cbee"/><stop offset="1" stop-color="#c6d9f4"/></linearGradient></defs><path d="M62.5 1137.5 V1125.0 q0 -2.500 2.500 -2.500 H125.5 q2.500 0 2.500 2.500 V1137.5 z" fill="url(#tg)" stroke="#6a8cc4" stroke-width="1"/><path d="M113.7 1137.5 L122.7 1124.5 q1.500 -2 3.500 -2 H177.5 q2.500 0 2.500 2.500 V1137.5 z" fill="url(#tg)" stroke="#6a8cc4" stroke-width="1"/><path d="M165 1137.5 L174 1124.5 q1.500 -2 3.500 -2 H216.0 q2.500 0 2.500 2.500 V1137.5 z" fill="url(#tg)" stroke="#6a8cc4" stroke-width="1"/><path d="M219.5 1137.5 V1125.0 q0 -2.500 2.500 -2.500 H282.5 q2.500 0 2.500 2.500 V1137.5" fill="#fff" stroke="#6a8cc4" stroke-width="1"/><path d="M270.6 1137.5 L279.6 1124.5 q1.500 -2 3.500 -2 H334.5 q2.500 0 2.500 2.500 V1137.5 z" fill="url(#tg)" stroke="#6a8cc4" stroke-width="1"/><path d="M323 1137.5 L332 1124.5 q1.500 -2 3.500 -2 H365 L353 1137.5 z" fill="url(#tg)" stroke="#6a8cc4" stroke-width="1"/></svg>
<div class="t" style="left:73.7px;top:1124.4px;font-size:13.3px;color:#15428b;letter-spacing:-1.19px;">Hoja1</div>
<div class="t" style="left:126.2px;top:1124.4px;font-size:13.3px;color:#15428b;letter-spacing:-1.19px;">Hoja2</div>
<div class="t" style="left:178.0px;top:1124.4px;font-size:13.3px;color:#15428b;letter-spacing:-1.01px;">Hoja3</div>
<div class="t" style="left:228.5px;top:1124.4px;font-size:13.3px;color:#15357b;font-weight:bold;letter-spacing:-0.25px;">Hoja4</div>
<div class="t" style="left:282.0px;top:1124.4px;font-size:13.3px;color:#15428b;letter-spacing:-0.94px;">Hoja5</div>
<div class="a" style="left:220px;top:1137px;width:51px;height:2px;background:#fff"></div>
<svg style="left:334px;top:1124px" width="16" height="13" viewBox="0 0 16 13"><rect x="4.500" y="3.500" width="10" height="8" rx="1" fill="#e8eef8" stroke="#5a6f9e"/><path d="M3.500 0 v7 M0 3.500 h7 M1 1 l5 5 M6 1 l-5 5" stroke="#f0a020" stroke-width="1"/></svg>
<div class="a" style="left:1149px;top:1122px;width:751px;height:16px;background:#7a9ac6;border-top:1px solid #8cabd9;box-sizing:border-box"></div>
<div class="a" style="left:1900px;top:1122px;width:16px;height:16px;background:#7b9fd4"></div>
<div class="a" style="left:1142px;top:1123px;width:6px;height:14px;border:1px solid #6f8fc4;border-radius:2px;background:#e9eef6;box-sizing:border-box"></div>
<svg style="left:1153px;top:1126px" width="6" height="9"><path d="M5.500 0 v9 l-5.500 -4.500z" fill="#4c5a7d"/></svg>
<div class="a" style="left:1166px;top:1123px;width:637px;height:14px;box-sizing:border-box;border:1px solid #5a6f9e;border-radius:2px;background:linear-gradient(#eceff5 0,#e3e8f0 45%,#c3cfe2 55%,#c9d4e5 100%)"></div>
<svg style="left:1480px;top:1127px" width="8" height="8"><path d="M0.500 0 v7 M2.500 0 v7 M4.500 0 v7 M6.500 0 v7" stroke="#6f83ab" stroke-width="1"/></svg>
<svg style="left:1889px;top:1126px" width="6" height="9"><path d="M0 0 v9 l5.500 -4.500z" fill="#4c5a7d"/></svg>
<div class="a" style="left:0;top:1139px;width:1920px;height:21px;background:linear-gradient(#e3edfb 0,#d3e2f8 5px,#bcd2f1 6px,#aec8ee 13px,#c5d9f5 14px,#d9e7fa 21px)"></div>
<div class="a" style="left:1675px;top:1139px;width:241px;height:21px;background:linear-gradient(#b4caec 0,#a3bde6 4px,#8dabda 6px,#86a6d7 12px,#9bb7e2 14px,#aac3e9 21px);border-left:1px solid #d9e6f8"></div>
<div class="a" style="left:66px;top:1140px;width:1px;height:19px;background:#8fb0e0"></div><div class="a" style="left:67px;top:1140px;width:1px;height:19px;background:#eaf2fd"></div>
<div class="a" style="left:1916px;top:1139px;width:4px;height:21px;background:#b5cdf0"></div>
<div class="t" style="left:7.5px;top:1143.8px;font-size:11.5px;color:#15428b;letter-spacing:-0.45px;">Listo</div>
<div class="a" style="left:1679px;top:1141px;width:20px;height:17px;border:1px solid #e5a13c;box-sizing:border-box;background:linear-gradient(#fdd9a0,#fbb04a 50%,#fdd683)"></div>
<div class="a" style="left:1699px;top:1141px;width:38px;height:17px;border:1px solid #9db7de;box-sizing:border-box;background:linear-gradient(#e3edfb,#bcd2f1)"></div>
<div class="a" style="left:1717px;top:1142px;width:1px;height:15px;background:#9db7de"></div>
<svg style="left:1683px;top:1144px" width="52" height="12" viewBox="0 0 52 12">
<rect x="0.500" y="0.500" width="11" height="10" fill="#fff" stroke="#4a5568"/><path d="M0.500 3.500 h11 M0.500 7 h11 M4 0.500 v10 M8 0.500 v10" stroke="#4a5568" stroke-width=".8"/>
<rect x="19.500" y="0.500" width="11" height="10" fill="#fff" stroke="#4a5568"/><rect x="22" y="3" width="6" height="5" fill="none" stroke="#4a5568"/>
<rect x="38.500" y="0.500" width="11" height="10" fill="#fff" stroke="#4a5568"/><path d="M44 0.500 v6 M38.500 6.500 h11" stroke="#4a5568"/><path d="M41 1 v5 M47 1 v5" stroke="#8090b0" stroke-width="1.500"/>
</svg>
<div class="t" style="left:1745.0px;top:1143.8px;font-size:11.5px;color:#15428b;letter-spacing:-0.97px;">100%</div>
<svg style="left:1780px;top:1140px" width="136" height="18" viewBox="0 0 136 18">
<path d="M16 9 H119" stroke="#6c87b5" stroke-width="1"/><path d="M16 10 H119" stroke="#f1f6fd" stroke-width="1"/><path d="M66.500 5 v9" stroke="#6c87b5"/>
<circle cx="8.500" cy="8.500" r="6.800" fill="#e9f0fb" stroke="#5a6f9e"/><path d="M5 8.500 h7" stroke="#3d4f78" stroke-width="1.600"/>
<circle cx="126.500" cy="8.500" r="6.800" fill="#e9f0fb" stroke="#5a6f9e"/><path d="M123 8.500 h7 M126.500 5 v7" stroke="#3d4f78" stroke-width="1.600"/>
<path d="M63 3.500 h7 v6 l-3.500 4 l-3.500 -4z" fill="#e4ebf6" stroke="#5a6f9e"/>
</svg>
<div class="a" id="task" style="left:0;top:1160px;width:1920px;height:40px;overflow:hidden;background:linear-gradient(90deg,#4e5349 0,#585c50 3%,#5a5e52 8%,#5e6355 15%,#5f6b5a 22%,#647572 30%,#69808a 38%,#6a828c 55%,#5f747c 70%,#55666c 85%,#48555a 100%)">
<div class="a" style="left:0;top:0;width:1920px;height:40px;background:linear-gradient(rgba(255,255,255,.06) 0,rgba(255,255,255,0) 50%,rgba(0,0,0,.05) 100%)"></div>
<div class="a" style="left:716px;top:-40px;width:9px;height:120px;background:rgba(165,200,235,.75);transform:rotate(67deg);filter:blur(1.5px)"></div>
<div class="a" style="left:0;top:0;width:1920px;height:1px;background:#23262a"></div><div class="a" style="left:0;top:1px;width:1920px;height:1px;background:rgba(255,255,255,.28)"></div>
<div class="a" style="left:254px;top:1px;width:57px;height:39px;border:1px solid #1f2220;border-radius:3px 3px 0 0;background:linear-gradient(135deg,rgba(190,195,185,.75),rgba(120,125,112,.65) 55%,rgba(100,105,92,.6));box-shadow:inset 0 0 0 1px rgba(255,255,255,.35)"></div>
<div class="a" style="left:316px;top:1px;width:57px;height:39px;border:1px solid #1f2220;border-radius:3px 3px 0 0;background:linear-gradient(120deg,rgba(230,232,226,.95),rgba(175,178,168,.9) 55%,rgba(150,154,144,.85));box-shadow:inset 0 0 0 1px rgba(255,255,255,.6)"></div>
<div class="a" style="left:60px;top:7px;width:56px;height:26px;border:1px solid rgba(255,255,255,.25);border-radius:2px;background:rgba(60,62,56,.25)"></div>
<div class="a" style="left:1898px;top:1px;width:22px;height:39px;border-left:1px solid #2a2e30;background:linear-gradient(135deg,rgba(255,255,255,.32),rgba(255,255,255,.12));box-shadow:inset 1px 0 0 rgba(255,255,255,.4)"></div>
</div>
<div class="t" style="left:64.5px;top:1169.7px;font-size:21px;color:#fff;font-family:'Liberation Serif',serif;transform:scaleX(0.78);transform-origin:0 50%;text-shadow:0 0 2px rgba(0,0,0,.6);">Google</div>
<div class="a" style="left:9px;top:1162px;width:36px;height:36px;border-radius:50%;background:radial-gradient(circle at 50% 30%,#8fc4ef 0,#3f86c8 40%,#1d5a9c 70%,#123e74 100%);box-shadow:0 0 0 1px #0e2f5a,0 0 4px rgba(120,180,240,.6)"></div>
<svg style="left:12px;top:1165px" width="31" height="31" viewBox="-1 1 24.500 24.500">
<path d="M3 5.500 c3 -1.500 6 -1.500 8.500 0 l-1.800 6.500 c-2.500 -1.500 -5.500 -1.500 -8.500 0z" fill="#f2582a"/>
<path d="M13.500 6.500 c3 1.500 6 1.500 9 0 l-1.800 6.500 c-3 1.500 -6 1.500 -9 0z" fill="#8cc63e"/>
<path d="M0.800 14 c3 -1.500 6 -1.500 8.500 0 l-1.800 6.500 c-2.500 -1.500 -5.500 -1.500 -8.500 0z" fill="#2fa3e6" transform="translate(.5 0)"/>
<path d="M11.200 15 c3 1.500 6 1.500 9 0 l-1.800 6.500 c-3 1.500 -6 1.500 -9 0z" fill="#fbc02d"/>
</svg>
<svg style="left:142px;top:1162px" width="36" height="34" viewBox="0 0 36 34">
<ellipse cx="18" cy="17" rx="17.500" ry="6.500" transform="rotate(-38 18 17)" fill="none" stroke="#e8b51c" stroke-width="2.600"/>
<path d="M27.500 17.500 A9.500 9.500 0 1 0 25.200 24.500" fill="none" stroke="#2f9be6" stroke-width="6.500"/>
<path d="M9 18 H30" stroke="#2f9be6" stroke-width="4.500"/>
<path d="M27.500 17.500 A9.500 9.500 0 1 0 25.200 24.500" fill="none" stroke="#6fc6f6" stroke-width="2"/>
<path d="M5.500 24 C3 29 5 32 10 30" fill="none" stroke="#f2c11c" stroke-width="2.600"/>
<path d="M24 5.500 C29 2 34 2.500 33 8" fill="none" stroke="#f2c11c" stroke-width="2.600"/>
</svg>
<svg style="left:204px;top:1165px" width="34" height="32" viewBox="0 0 34 32">
<path d="M2 6 h10 l2 2 h17 v20 h-29z" fill="#e9c86a" stroke="#b8933a" stroke-width=".8"/>
<path d="M4 4.500 h9 l2 2 h15 v3 h-26z" fill="#f7e3a0" stroke="#c9a64a" stroke-width=".6"/>
<rect x="5" y="3" width="3" height="2" fill="#2fb04a"/><rect x="13" y="5" width="3" height="2" fill="#d43a2a"/><rect x="20" y="7" width="3" height="2" fill="#2f8fe0"/>
<path d="M2 11 h30 v17 h-30z" fill="#f3da8c" stroke="#c9a64a" stroke-width=".6"/>
<path d="M6 31 v-11 q0 -2 2 -2 h17 q2 0 2 2 v11 h-5 v-8 h-11 v8z" fill="#6fc3ee" stroke="#2f86c0" stroke-width=".8"/><path d="M8 20 h18" stroke="#c9ecfb" stroke-width="1.500"/>
</svg>
<svg style="left:268px;top:1165px" width="30" height="30" viewBox="-15 -15 30 30">
<circle r="14" fill="#e33b2e"/>
<path d="M0 0 L-12.120 -7 A14 14 0 0 0 0 14 z" fill="#2fa84f" transform="rotate(0)"/>
<path d="M0 0 L0 14 A14 14 0 0 0 12.120 -7 z" fill="#fbc116"/>
<path d="M0 0 L-12.120 -7 A14 14 0 0 1 12.120 -7 z" fill="#e33b2e"/>
<path d="M-5.500 3.200 L0 14 A14 14 0 0 1 -12.120 -7 z" fill="#2fa84f"/>
<circle r="6.600" fill="#fff"/><circle r="5.300" fill="#3f7fd8"/>
</svg>
<svg style="left:328px;top:1163px" width="34" height="32" viewBox="0 0 34 32">
<path d="M1.500 25 V9 q0 -7.500 8 -7.500 h17.500 v9" fill="#f2f6ee" stroke="#3d9a2a" stroke-width="1.600"/>
<path d="M5.500 8.500 L31.500 11.500 L29.500 31 L4.500 26z" fill="#f8faf5" stroke="#d4dccd" stroke-width=".8"/>
<path d="M8 11.500 L13 12.200 L15 15.500 L18 12.900 L22.500 13.500 L17 18.200 L21 23.500 L16.200 22.800 L14 19.800 L11 22 L6.800 21.300 L12 16.800z" fill="#1f6b1f"/>
<path d="M24 14 l5.500 .7 l-.4 3.600 l-5.500 -.7z M23.400 19.300 l5.500 .7 l-.4 3.600 l-5.500 -.7z M7 22.800 l6 1 l-.4 3.200 l-6 -1.100z M14.300 24 l6 1 l-.4 3.300 l-6 -1.100z M21.800 25.200 l6 1 l-.4 3.400 l-6 -1.100z" fill="#5aa648"/>
</svg>
<svg style="left:1700px;top:1170px" width="120" height="24" viewBox="0 0 120 24">
<path d="M1 13 h8 l-4 -4.500z" fill="#e8ecee"/>
<path d="M21.500 4 v16" stroke="#fff" stroke-width="1.600"/><path d="M23 5 c3 -1.500 5 1.500 9 0 v7 c-4 1.500 -6 -1.500 -9 0z" fill="#fff"/>
<rect x="49.500" y="7.500" width="10" height="8" fill="#dfe6ea" stroke="#fff"/><path d="M52 18.500 h6 M55 15.500 v3" stroke="#fff" stroke-width="1.400"/><path d="M46.500 5 v10 M44.500 5 h4" stroke="#fff" stroke-width="1.400"/>
<path d="M70 9.500 h3.500 l4.500 -4 v13 l-4.500 -4 h-3.500z" fill="#fff"/><path d="M80.500 8 q2.500 4 0 8 M83.500 6 q4 6 0 12" fill="none" stroke="#fff" stroke-width="1.200"/>
<path d="M97.500 3.500 l4 2.500 l-4 2.500 l-4 -2.500z M105.500 3.500 l4 2.500 l-4 2.500 l-4 -2.500z M97.500 9 l4 2.500 l-4 2.500 l-4 -2.500z M105.500 9 l4 2.500 l-4 2.500 l-4 -2.500z M101.500 13 l4 2.500 l-4 2 l-4 -2z" fill="#3d9ae8" stroke="#d9ecfb" stroke-width=".5"/><circle cx="105.500" cy="15.500" r="3.800" fill="#2f9a3a" stroke="#fff" stroke-width=".6"/><path d="M103.500 15.500 l1.500 1.500 l2.500 -3" stroke="#fff" stroke-width="1.100" fill="none"/>
</svg>
<div class="t" style="left:1842.5px;top:1167.3px;font-size:11.5px;color:#fff;letter-spacing:-0.44px;">12:16</div>
<div class="t" style="left:1826.5px;top:1184.3px;font-size:11.5px;color:#fff;letter-spacing:0.1px;">03/12/2012</div>
</body></html>
